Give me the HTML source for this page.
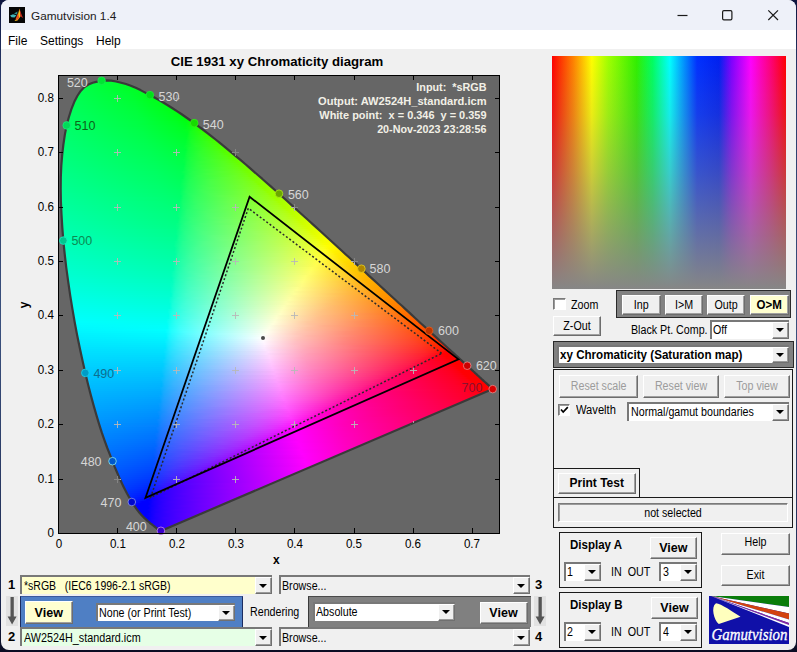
<!DOCTYPE html>
<html><head><meta charset="utf-8"><title>Gamutvision 1.4</title>
<style>
html,body{margin:0;padding:0}
body{width:797px;height:652px;position:relative;overflow:hidden;background:linear-gradient(to bottom,#0d153f 0%,#2a3c6c 12%,#3a507d 50%,#1c2850 92%,#0a0c22 100%);font-family:"Liberation Sans",sans-serif;font-size:12px;color:#000}
div,span{position:absolute;box-sizing:border-box;white-space:pre}
#win{left:1px;top:0;width:794.8px;height:650px;background:#f0f0f0;border-radius:8px 8px 8px 8px;overflow:hidden}
#tb{left:0;top:0;width:797px;height:30px;background:#eef1f9}
#mb{left:0;top:30px;width:797px;height:19px;background:#fff}
.t{transform-origin:0 50%;transform:scaleX(.89);line-height:14px;height:14px}
.tb{transform-origin:0 50%;transform:scaleX(.96);font-weight:bold;line-height:14px;height:14px}
.btn{background:#f0f0f0;border:1px solid;border-color:#fff #6d6d6d #6d6d6d #fff;box-shadow:inset -1px -1px 0 #a0a0a0}
.btn>span{left:0;right:0;text-align:center;transform-origin:50% 50%}
.dd{background:#fff;border:0 solid #787878;border-width:2px 0 0 2px}
.ab{width:17px;background:#f0f0f0;border:1px solid;border-color:#fff #707070 #707070 #fff;box-shadow:inset -1px -1px 0 #9a9a9a;right:0;top:0;bottom:0}
.ab:after{content:"";position:absolute;left:3.2px;top:50%;margin-top:-2px;border:4px solid transparent;border-top:4.3px solid #000;border-bottom:0}
.fr{border:1px solid #1a1a1a}
.cb{width:12.3px;height:12.3px;background:#fff;border:1px solid;border-color:#7a7a7a #fff #fff #7a7a7a;box-shadow:inset 1px 1px 0 #9a9a9a}
.tk{font-size:12.5px;line-height:14px;height:14px}
.wl{font-size:12.5px;line-height:14px;height:14px;color:#d4d4d4}
.inf{font-size:11.2px;font-weight:bold;color:#f2f0e6;right:310.5px;text-align:right;line-height:14px;height:14px}
</style></head><body>
<div id="win">
<div id="tb"></div><div id="mb"></div>
</div>
<svg style="position:absolute;left:9px;top:7px" width="16" height="16" viewBox="0 0 16 16"><rect width="16" height="16" fill="#060606"/><path d="M10.5 1.5 L11.8 9 L8.5 13.5 L5.5 14 L8 11 Z" fill="#f7c21c"/><path d="M10.5 1.5 L12 6 L14 11 L11.5 9.5 Z" fill="#c8251c"/><path d="M9 6 L10.3 11 L7.5 13.6 L6.8 11.5 Z" fill="#e8521c"/><path d="M1 8.5 L4 7.2 L7.5 8.2 L5.5 10.5 L2.5 10.2 Z" fill="#3fb4b8"/><path d="M5 6.5 L8.5 4.5 L8 7.5 Z" fill="#2a8f8f"/></svg><span style="left:31px;top:8px;font-size:11.8px;line-height:16px;color:#1b1b1b">Gamutvision 1.4</span><svg style="position:absolute;left:670px;top:5px" width="120" height="22"><path d="M7.5 10.5H17.5" stroke="#1a1a1a" stroke-width="1.2" fill="none"/><rect x="52.6" y="5.6" width="9.3" height="9.3" rx="1.3" stroke="#1a1a1a" stroke-width="1.2" fill="none"/><path d="M98.3 5.3L108 15M108 5.3L98.3 15" stroke="#1a1a1a" stroke-width="1.2" fill="none"/></svg><span style="left:8px;top:33px;font-size:12px;line-height:16px">File</span><span style="left:40px;top:33px;font-size:12px;line-height:16px">Settings</span><span style="left:96px;top:33px;font-size:12px;line-height:16px">Help</span><svg style="position:absolute;left:0;top:0" width="797" height="652" viewBox="0 0 797 652"><defs><clipPath id="hc"><path d="M161.4 530.7 L161.4 530.7 L161.4 530.7 L161.4 530.7 L161.4 530.7 L161.3 530.7 L161.3 530.7 L161.3 530.7 L161.3 530.7 L161.2 530.7 L161.2 530.7 L161.2 530.7 L161.2 530.7 L161.1 530.7 L161.1 530.7 L161.1 530.7 L161.1 530.7 L161.0 530.8 L161.0 530.8 L161.0 530.8 L160.9 530.8 L160.9 530.8 L160.9 530.8 L160.8 530.8 L160.8 530.8 L160.7 530.8 L160.7 530.8 L160.7 530.8 L160.6 530.8 L160.6 530.8 L160.5 530.8 L160.5 530.8 L160.4 530.8 L160.3 530.8 L160.3 530.8 L160.2 530.8 L160.1 530.8 L160.1 530.7 L160.0 530.7 L159.9 530.7 L159.8 530.6 L159.7 530.6 L159.6 530.5 L159.4 530.4 L159.3 530.3 L159.1 530.2 L159.0 530.1 L158.8 530.0 L158.7 529.9 L158.5 529.8 L158.3 529.6 L158.1 529.5 L157.9 529.3 L157.6 529.1 L157.4 528.9 L157.1 528.7 L156.9 528.5 L156.6 528.3 L156.3 528.0 L156.0 527.7 L155.7 527.5 L155.3 527.2 L154.9 526.9 L154.6 526.6 L154.2 526.2 L153.7 525.9 L153.2 525.5 L152.7 525.1 L152.2 524.7 L151.6 524.2 L151.1 523.8 L150.4 523.3 L149.8 522.8 L149.2 522.2 L148.5 521.7 L147.7 521.1 L147.0 520.4 L146.2 519.7 L145.4 518.9 L144.5 518.1 L143.6 517.2 L142.7 516.3 L141.7 515.4 L140.8 514.3 L139.7 513.1 L138.6 511.7 L137.4 510.1 L136.1 508.4 L134.8 506.5 L133.3 504.4 L131.8 502.0 L130.3 499.3 L128.7 496.5 L127.0 493.5 L125.2 490.0 L123.3 486.2 L121.3 482.0 L119.2 477.4 L117.1 472.5 L114.8 467.1 L112.5 461.2 L110.0 454.8 L107.3 448.0 L104.6 440.6 L101.8 432.7 L99.1 424.2 L96.4 415.1 L93.6 405.4 L90.8 395.1 L88.0 384.3 L85.3 372.9 L82.6 361.0 L79.9 348.5 L77.2 335.5 L74.7 322.2 L72.4 308.9 L70.2 295.5 L68.2 281.7 L66.3 267.8 L64.7 254.0 L63.3 240.6 L62.3 227.4 L61.5 214.3 L60.9 201.5 L60.7 189.1 L60.8 177.3 L61.3 165.9 L62.2 154.8 L63.4 144.3 L64.9 134.4 L66.7 125.4 L68.9 117.0 L71.4 109.2 L74.2 102.1 L77.3 96.0 L80.7 90.9 L84.4 87.1 L88.4 84.5 L92.7 82.7 L97.1 81.6 L101.6 80.8 L106.3 80.4 L111.2 80.7 L116.1 81.5 L121.1 82.7 L126.0 84.0 L130.8 85.7 L135.7 87.8 L140.5 90.1 L145.2 92.6 L149.9 95.1 L154.5 97.5 L159.1 100.1 L163.6 102.8 L168.1 105.5 L172.5 108.3 L176.9 111.1 L181.3 114.0 L185.6 117.0 L189.9 120.0 L194.2 123.1 L198.5 126.3 L202.8 129.5 L207.1 132.8 L211.3 136.1 L215.6 139.5 L219.8 142.9 L224.1 146.3 L228.3 149.8 L232.5 153.3 L236.7 156.9 L241.0 160.4 L245.2 164.0 L249.4 167.7 L253.6 171.3 L257.8 175.0 L262.1 178.7 L266.3 182.5 L270.5 186.2 L274.8 190.0 L279.0 193.7 L283.2 197.5 L287.4 201.3 L291.6 205.1 L295.8 208.9 L300.0 212.7 L304.2 216.5 L308.4 220.3 L312.6 224.1 L316.8 227.9 L321.0 231.7 L325.1 235.5 L329.2 239.2 L333.3 243.0 L337.4 246.7 L341.5 250.5 L345.5 254.2 L349.5 257.8 L353.5 261.5 L357.5 265.1 L361.4 268.7 L365.3 272.3 L369.1 275.9 L373.0 279.4 L376.7 282.8 L380.5 286.3 L384.2 289.6 L387.8 293.0 L391.4 296.3 L395.0 299.5 L398.4 302.7 L401.9 305.8 L405.2 308.9 L408.5 311.9 L411.7 314.9 L414.8 317.7 L417.8 320.5 L420.7 323.2 L423.6 325.8 L426.4 328.3 L429.1 330.8 L431.7 333.2 L434.3 335.6 L436.8 337.9 L439.2 340.1 L441.6 342.3 L443.8 344.3 L446.0 346.3 L448.1 348.2 L450.1 350.0 L452.0 351.7 L453.8 353.4 L455.6 355.0 L457.3 356.6 L458.9 358.1 L460.4 359.5 L461.9 360.9 L463.3 362.2 L464.7 363.4 L465.9 364.6 L467.2 365.7 L468.4 366.8 L469.5 367.8 L470.5 368.8 L471.6 369.7 L472.6 370.6 L473.5 371.5 L474.4 372.3 L475.2 373.1 L476.1 373.8 L476.9 374.6 L477.6 375.3 L478.4 376.0 L479.1 376.6 L479.8 377.3 L480.5 377.9 L481.1 378.5 L481.7 379.1 L482.3 379.6 L482.9 380.1 L483.4 380.6 L483.9 381.1 L484.4 381.5 L484.9 382.0 L485.4 382.4 L485.8 382.7 L486.2 383.1 L486.6 383.4 L486.9 383.8 L487.2 384.1 L487.6 384.4 L487.9 384.7 L488.2 384.9 L488.4 385.2 L488.7 385.4 L488.9 385.6 L489.1 385.8 L489.3 386.0 L489.5 386.2 L489.7 386.4 L489.9 386.5 L490.2 386.8 L490.4 387.0 L490.7 387.2 L490.9 387.4 L491.1 387.6 L491.3 387.8 L491.5 388.0 L491.6 388.1 L491.8 388.3 L491.9 388.4 L492.1 388.5 L492.2 388.6 L492.3 388.8 L492.4 388.9 L492.5 388.9 L492.6 389.0 L492.6 389.0 L492.7 389.1 L492.7 389.1 L492.7 389.1 Z"/></clipPath><linearGradient id="g0" gradientUnits="userSpaceOnUse" x1="98.9" x2="114.3"><stop offset="0" stop-color="#00ff39"/><stop offset="1" stop-color="#00ff2e"/></linearGradient><linearGradient id="g1" gradientUnits="userSpaceOnUse" x1="90.5" x2="123.8"><stop offset="0" stop-color="#00ff40"/><stop offset="1" stop-color="#00ff28"/></linearGradient><linearGradient id="g2" gradientUnits="userSpaceOnUse" x1="86.1" x2="130.3"><stop offset="0" stop-color="#00ff44"/><stop offset="1" stop-color="#00ff25"/></linearGradient><linearGradient id="g3" gradientUnits="userSpaceOnUse" x1="83.1" x2="135.3"><stop offset="0" stop-color="#00ff47"/><stop offset="0.941" stop-color="#00ff25"/><stop offset="1" stop-color="#00ff22"/></linearGradient><linearGradient id="g4" gradientUnits="userSpaceOnUse" x1="81.1" x2="139.6"><stop offset="0" stop-color="#00ff49"/><stop offset="0.895" stop-color="#00ff26"/><stop offset="1" stop-color="#00ff20"/></linearGradient><linearGradient id="g5" gradientUnits="userSpaceOnUse" x1="79.1" x2="143.6"><stop offset="0" stop-color="#00ff4c"/><stop offset="0.857" stop-color="#00ff27"/><stop offset="1" stop-color="#00ff1d"/></linearGradient><linearGradient id="g6" gradientUnits="userSpaceOnUse" x1="77.8" x2="147.5"><stop offset="0" stop-color="#00ff4e"/><stop offset="0.826" stop-color="#00ff29"/><stop offset="1" stop-color="#00ff1c"/></linearGradient><linearGradient id="g7" gradientUnits="userSpaceOnUse" x1="76.5" x2="151.3"><stop offset="0" stop-color="#00ff4f"/><stop offset="0.708" stop-color="#00ff30"/><stop offset="1" stop-color="#00ff19"/></linearGradient><linearGradient id="g8" gradientUnits="userSpaceOnUse" x1="75.3" x2="155.0"><stop offset="0" stop-color="#00ff51"/><stop offset="0.692" stop-color="#00ff31"/><stop offset="1" stop-color="#00ff17"/></linearGradient><linearGradient id="g9" gradientUnits="userSpaceOnUse" x1="74.3" x2="158.6"><stop offset="0" stop-color="#00ff53"/><stop offset="0.679" stop-color="#00ff32"/><stop offset="1" stop-color="#00ff15"/></linearGradient><linearGradient id="g10" gradientUnits="userSpaceOnUse" x1="73.3" x2="162.1"><stop offset="0" stop-color="#00ff55"/><stop offset="0.69" stop-color="#00ff31"/><stop offset="0.966" stop-color="#00ff18"/><stop offset="1" stop-color="#00ff13"/></linearGradient><linearGradient id="g11" gradientUnits="userSpaceOnUse" x1="72.3" x2="165.4"><stop offset="0" stop-color="#00ff57"/><stop offset="0.677" stop-color="#00ff33"/><stop offset="0.968" stop-color="#00ff16"/><stop offset="1" stop-color="#00ff11"/></linearGradient><linearGradient id="g12" gradientUnits="userSpaceOnUse" x1="71.5" x2="168.7"><stop offset="0" stop-color="#00ff58"/><stop offset="0.656" stop-color="#00ff35"/><stop offset="0.937" stop-color="#00ff19"/><stop offset="1" stop-color="#00ff0e"/></linearGradient><linearGradient id="g13" gradientUnits="userSpaceOnUse" x1="70.7" x2="171.9"><stop offset="0" stop-color="#00ff5a"/><stop offset="0.636" stop-color="#00ff37"/><stop offset="0.939" stop-color="#00ff18"/><stop offset="1" stop-color="#00ff0c"/></linearGradient><linearGradient id="g14" gradientUnits="userSpaceOnUse" x1="70.0" x2="175.1"><stop offset="0" stop-color="#00ff5b"/><stop offset="0.629" stop-color="#00ff38"/><stop offset="0.914" stop-color="#00ff1b"/><stop offset="1" stop-color="#00ff09"/></linearGradient><linearGradient id="g15" gradientUnits="userSpaceOnUse" x1="69.3" x2="178.2"><stop offset="0" stop-color="#00ff5d"/><stop offset="0.611" stop-color="#00ff3a"/><stop offset="0.917" stop-color="#00ff1a"/><stop offset="0.972" stop-color="#00ff0f"/><stop offset="1" stop-color="#00ff04"/></linearGradient><linearGradient id="g16" gradientUnits="userSpaceOnUse" x1="68.7" x2="181.2"><stop offset="0" stop-color="#00ff5e"/><stop offset="0.595" stop-color="#00ff3c"/><stop offset="0.892" stop-color="#00ff1d"/><stop offset="0.973" stop-color="#00ff0d"/><stop offset="1" stop-color="#00ff00"/></linearGradient><linearGradient id="g17" gradientUnits="userSpaceOnUse" x1="68.0" x2="184.1"><stop offset="0" stop-color="#00ff60"/><stop offset="0.605" stop-color="#00ff3c"/><stop offset="0.895" stop-color="#00ff1c"/><stop offset="0.974" stop-color="#00ff0a"/><stop offset="1" stop-color="#00ff00"/></linearGradient><linearGradient id="g18" gradientUnits="userSpaceOnUse" x1="67.4" x2="187.0"><stop offset="0" stop-color="#00ff62"/><stop offset="0.59" stop-color="#00ff3e"/><stop offset="0.872" stop-color="#00ff1f"/><stop offset="0.974" stop-color="#00ff08"/><stop offset="1" stop-color="#00ff00"/></linearGradient><linearGradient id="g19" gradientUnits="userSpaceOnUse" x1="66.9" x2="189.9"><stop offset="0" stop-color="#00ff63"/><stop offset="0.61" stop-color="#00ff3d"/><stop offset="0.878" stop-color="#00ff1e"/><stop offset="0.951" stop-color="#00ff0f"/><stop offset="0.976" stop-color="#00ff04"/><stop offset="1" stop-color="#0aff00"/></linearGradient><linearGradient id="g20" gradientUnits="userSpaceOnUse" x1="66.3" x2="192.7"><stop offset="0" stop-color="#00ff64"/><stop offset="0.595" stop-color="#00ff3f"/><stop offset="0.881" stop-color="#00ff1d"/><stop offset="0.952" stop-color="#00ff0d"/><stop offset="0.976" stop-color="#0aff00"/><stop offset="1" stop-color="#16ff00"/></linearGradient><linearGradient id="g21" gradientUnits="userSpaceOnUse" x1="65.8" x2="195.5"><stop offset="0" stop-color="#00ff66"/><stop offset="0.581" stop-color="#00ff41"/><stop offset="0.86" stop-color="#00ff21"/><stop offset="0.93" stop-color="#00ff13"/><stop offset="0.977" stop-color="#16ff00"/><stop offset="1" stop-color="#1eff00"/></linearGradient><linearGradient id="g22" gradientUnits="userSpaceOnUse" x1="65.3" x2="198.2"><stop offset="0" stop-color="#00ff67"/><stop offset="0.545" stop-color="#00ff44"/><stop offset="0.841" stop-color="#00ff24"/><stop offset="0.909" stop-color="#00ff17"/><stop offset="0.977" stop-color="#1eff00"/><stop offset="1" stop-color="#25ff00"/></linearGradient><linearGradient id="g23" gradientUnits="userSpaceOnUse" x1="64.9" x2="200.9"><stop offset="0" stop-color="#00ff69"/><stop offset="0.578" stop-color="#00ff42"/><stop offset="0.822" stop-color="#00ff27"/><stop offset="0.889" stop-color="#00ff1b"/><stop offset="0.978" stop-color="#24ff00"/><stop offset="1" stop-color="#2aff00"/></linearGradient><linearGradient id="g24" gradientUnits="userSpaceOnUse" x1="64.5" x2="203.6"><stop offset="0" stop-color="#00ff6a"/><stop offset="0.543" stop-color="#00ff46"/><stop offset="0.826" stop-color="#00ff27"/><stop offset="0.87" stop-color="#00ff1f"/><stop offset="0.891" stop-color="#07ff1b"/><stop offset="0.935" stop-color="#1dff0f"/><stop offset="0.978" stop-color="#2aff00"/><stop offset="1" stop-color="#30ff00"/></linearGradient><linearGradient id="g25" gradientUnits="userSpaceOnUse" x1="64.1" x2="206.2"><stop offset="0" stop-color="#00ff6b"/><stop offset="0.532" stop-color="#00ff48"/><stop offset="0.83" stop-color="#00ff26"/><stop offset="0.872" stop-color="#05ff1f"/><stop offset="0.915" stop-color="#1dff15"/><stop offset="0.936" stop-color="#24ff0e"/><stop offset="0.957" stop-color="#2aff00"/><stop offset="1" stop-color="#35ff00"/></linearGradient><linearGradient id="g26" gradientUnits="userSpaceOnUse" x1="63.7" x2="208.8"><stop offset="0" stop-color="#00ff6d"/><stop offset="0.542" stop-color="#00ff48"/><stop offset="0.833" stop-color="#00ff26"/><stop offset="0.854" stop-color="#03ff22"/><stop offset="0.875" stop-color="#14ff1e"/><stop offset="0.938" stop-color="#2aff0d"/><stop offset="0.958" stop-color="#2fff00"/><stop offset="1" stop-color="#39ff00"/></linearGradient><linearGradient id="g27" gradientUnits="userSpaceOnUse" x1="63.3" x2="211.4"><stop offset="0" stop-color="#00ff6e"/><stop offset="0.531" stop-color="#00ff4a"/><stop offset="0.816" stop-color="#00ff29"/><stop offset="0.837" stop-color="#00ff26"/><stop offset="0.857" stop-color="#13ff22"/><stop offset="0.939" stop-color="#2fff0c"/><stop offset="0.959" stop-color="#34ff00"/><stop offset="1" stop-color="#3eff00"/></linearGradient><linearGradient id="g28" gradientUnits="userSpaceOnUse" x1="63.0" x2="214.0"><stop offset="0" stop-color="#00ff70"/><stop offset="0.54" stop-color="#00ff4a"/><stop offset="0.82" stop-color="#00ff29"/><stop offset="0.84" stop-color="#12ff25"/><stop offset="0.92" stop-color="#2fff13"/><stop offset="0.96" stop-color="#39ff00"/><stop offset="1" stop-color="#42ff00"/></linearGradient><linearGradient id="g29" gradientUnits="userSpaceOnUse" x1="62.7" x2="216.5"><stop offset="0" stop-color="#00ff71"/><stop offset="0.529" stop-color="#00ff4c"/><stop offset="0.804" stop-color="#00ff2c"/><stop offset="0.824" stop-color="#11ff28"/><stop offset="0.902" stop-color="#2eff18"/><stop offset="0.961" stop-color="#3dff00"/><stop offset="1" stop-color="#46ff00"/></linearGradient><linearGradient id="g30" gradientUnits="userSpaceOnUse" x1="62.4" x2="219.0"><stop offset="0" stop-color="#00ff72"/><stop offset="0.519" stop-color="#00ff4e"/><stop offset="0.788" stop-color="#00ff2f"/><stop offset="0.827" stop-color="#1aff28"/><stop offset="0.923" stop-color="#38ff11"/><stop offset="0.962" stop-color="#41ff00"/><stop offset="1" stop-color="#4aff00"/></linearGradient><linearGradient id="g31" gradientUnits="userSpaceOnUse" x1="62.1" x2="221.5"><stop offset="0" stop-color="#00ff74"/><stop offset="0.528" stop-color="#00ff4e"/><stop offset="0.774" stop-color="#00ff31"/><stop offset="0.811" stop-color="#19ff2b"/><stop offset="0.906" stop-color="#38ff17"/><stop offset="0.962" stop-color="#46ff00"/><stop offset="1" stop-color="#4eff00"/></linearGradient><linearGradient id="g32" gradientUnits="userSpaceOnUse" x1="61.8" x2="224.0"><stop offset="0" stop-color="#00ff75"/><stop offset="0.519" stop-color="#00ff50"/><stop offset="0.759" stop-color="#00ff34"/><stop offset="0.815" stop-color="#21ff2b"/><stop offset="0.907" stop-color="#3cff16"/><stop offset="0.963" stop-color="#49ff00"/><stop offset="1" stop-color="#51ff00"/></linearGradient><linearGradient id="g33" gradientUnits="userSpaceOnUse" x1="61.6" x2="226.4"><stop offset="0" stop-color="#00ff76"/><stop offset="0.519" stop-color="#00ff51"/><stop offset="0.741" stop-color="#00ff37"/><stop offset="0.815" stop-color="#26ff2c"/><stop offset="0.926" stop-color="#45ff10"/><stop offset="0.944" stop-color="#49ff04"/><stop offset="1" stop-color="#55ff00"/></linearGradient><linearGradient id="g34" gradientUnits="userSpaceOnUse" x1="61.3" x2="228.8"><stop offset="0" stop-color="#00ff78"/><stop offset="0.527" stop-color="#00ff51"/><stop offset="0.727" stop-color="#00ff3a"/><stop offset="0.745" stop-color="#05ff37"/><stop offset="0.764" stop-color="#15ff35"/><stop offset="0.855" stop-color="#36ff24"/><stop offset="0.927" stop-color="#49ff0f"/><stop offset="0.945" stop-color="#4dff00"/><stop offset="1" stop-color="#58ff00"/></linearGradient><linearGradient id="g35" gradientUnits="userSpaceOnUse" x1="61.1" x2="231.2"><stop offset="0" stop-color="#00ff79"/><stop offset="0.518" stop-color="#00ff53"/><stop offset="0.732" stop-color="#00ff3a"/><stop offset="0.75" stop-color="#13ff37"/><stop offset="0.839" stop-color="#36ff28"/><stop offset="0.929" stop-color="#4dff0e"/><stop offset="0.946" stop-color="#51ff00"/><stop offset="1" stop-color="#5cff00"/></linearGradient><linearGradient id="g36" gradientUnits="userSpaceOnUse" x1="60.9" x2="233.6"><stop offset="0" stop-color="#00ff7a"/><stop offset="0.509" stop-color="#00ff55"/><stop offset="0.719" stop-color="#00ff3d"/><stop offset="0.737" stop-color="#12ff3a"/><stop offset="0.807" stop-color="#30ff2f"/><stop offset="0.912" stop-color="#4cff15"/><stop offset="0.947" stop-color="#54ff00"/><stop offset="1" stop-color="#5fff00"/></linearGradient><linearGradient id="g37" gradientUnits="userSpaceOnUse" x1="60.7" x2="236.0"><stop offset="0" stop-color="#00ff7c"/><stop offset="0.517" stop-color="#00ff55"/><stop offset="0.707" stop-color="#00ff3f"/><stop offset="0.724" stop-color="#11ff3d"/><stop offset="0.793" stop-color="#30ff32"/><stop offset="0.914" stop-color="#50ff15"/><stop offset="0.948" stop-color="#58ff00"/><stop offset="1" stop-color="#63ff00"/></linearGradient><linearGradient id="g38" gradientUnits="userSpaceOnUse" x1="60.5" x2="238.4"><stop offset="0" stop-color="#00ff7d"/><stop offset="0.508" stop-color="#00ff57"/><stop offset="0.695" stop-color="#00ff41"/><stop offset="0.712" stop-color="#10ff3f"/><stop offset="0.78" stop-color="#2fff35"/><stop offset="0.898" stop-color="#50ff1a"/><stop offset="0.932" stop-color="#58ff0c"/><stop offset="0.949" stop-color="#5bff00"/><stop offset="1" stop-color="#66ff00"/></linearGradient><linearGradient id="g39" gradientUnits="userSpaceOnUse" x1="60.4" x2="240.8"><stop offset="0" stop-color="#00ff7e"/><stop offset="0.5" stop-color="#00ff59"/><stop offset="0.683" stop-color="#00ff44"/><stop offset="0.717" stop-color="#1aff3f"/><stop offset="0.8" stop-color="#39ff32"/><stop offset="0.917" stop-color="#57ff14"/><stop offset="0.95" stop-color="#5fff00"/><stop offset="1" stop-color="#69ff00"/></linearGradient><linearGradient id="g40" gradientUnits="userSpaceOnUse" x1="60.2" x2="243.1"><stop offset="0" stop-color="#00ff7f"/><stop offset="0.467" stop-color="#00ff5d"/><stop offset="0.667" stop-color="#00ff47"/><stop offset="0.683" stop-color="#07ff45"/><stop offset="0.717" stop-color="#1fff40"/><stop offset="0.833" stop-color="#46ff2c"/><stop offset="0.917" stop-color="#5bff14"/><stop offset="0.95" stop-color="#62ff00"/><stop offset="1" stop-color="#6dff00"/></linearGradient><linearGradient id="g41" gradientUnits="userSpaceOnUse" x1="60.0" x2="245.5"><stop offset="0" stop-color="#00ff81"/><stop offset="0.508" stop-color="#00ff5a"/><stop offset="0.656" stop-color="#00ff49"/><stop offset="0.672" stop-color="#04ff47"/><stop offset="0.689" stop-color="#15ff45"/><stop offset="0.754" stop-color="#32ff3b"/><stop offset="0.885" stop-color="#57ff1f"/><stop offset="0.934" stop-color="#62ff0a"/><stop offset="0.951" stop-color="#66ff00"/><stop offset="1" stop-color="#70ff00"/></linearGradient><linearGradient id="g42" gradientUnits="userSpaceOnUse" x1="59.9" x2="247.8"><stop offset="0" stop-color="#00ff82"/><stop offset="0.5" stop-color="#00ff5c"/><stop offset="0.661" stop-color="#00ff49"/><stop offset="0.677" stop-color="#13ff47"/><stop offset="0.726" stop-color="#2bff40"/><stop offset="0.871" stop-color="#56ff23"/><stop offset="0.919" stop-color="#62ff13"/><stop offset="0.952" stop-color="#69ff00"/><stop offset="1" stop-color="#73ff00"/></linearGradient><linearGradient id="g43" gradientUnits="userSpaceOnUse" x1="59.8" x2="250.1"><stop offset="0" stop-color="#00ff83"/><stop offset="0.492" stop-color="#00ff5e"/><stop offset="0.651" stop-color="#00ff4c"/><stop offset="0.667" stop-color="#12ff49"/><stop offset="0.73" stop-color="#31ff40"/><stop offset="0.889" stop-color="#5eff1f"/><stop offset="0.937" stop-color="#69ff09"/><stop offset="0.952" stop-color="#6cff00"/><stop offset="1" stop-color="#77ff00"/></linearGradient><linearGradient id="g44" gradientUnits="userSpaceOnUse" x1="59.7" x2="252.4"><stop offset="0" stop-color="#00ff85"/><stop offset="0.5" stop-color="#00ff5e"/><stop offset="0.641" stop-color="#00ff4e"/><stop offset="0.656" stop-color="#11ff4c"/><stop offset="0.703" stop-color="#2aff45"/><stop offset="0.844" stop-color="#56ff2b"/><stop offset="0.922" stop-color="#69ff12"/><stop offset="0.953" stop-color="#70ff00"/><stop offset="1" stop-color="#7aff00"/></linearGradient><linearGradient id="g45" gradientUnits="userSpaceOnUse" x1="59.6" x2="254.7"><stop offset="0" stop-color="#00ff86"/><stop offset="0.492" stop-color="#00ff60"/><stop offset="0.631" stop-color="#00ff50"/><stop offset="0.662" stop-color="#1bff4c"/><stop offset="0.754" stop-color="#40ff3e"/><stop offset="0.892" stop-color="#65ff1e"/><stop offset="0.923" stop-color="#6cff12"/><stop offset="0.954" stop-color="#73ff00"/><stop offset="1" stop-color="#7dff00"/></linearGradient><linearGradient id="g46" gradientUnits="userSpaceOnUse" x1="59.5" x2="257.0"><stop offset="0" stop-color="#00ff87"/><stop offset="0.477" stop-color="#00ff63"/><stop offset="0.615" stop-color="#00ff53"/><stop offset="0.677" stop-color="#27ff4b"/><stop offset="0.815" stop-color="#55ff33"/><stop offset="0.908" stop-color="#6cff19"/><stop offset="0.954" stop-color="#76ff00"/><stop offset="1" stop-color="#80ff00"/></linearGradient><linearGradient id="g47" gradientUnits="userSpaceOnUse" x1="59.4" x2="259.3"><stop offset="0" stop-color="#00ff89"/><stop offset="0.485" stop-color="#00ff63"/><stop offset="0.606" stop-color="#00ff55"/><stop offset="0.621" stop-color="#05ff53"/><stop offset="0.652" stop-color="#1fff4f"/><stop offset="0.742" stop-color="#43ff41"/><stop offset="0.894" stop-color="#6bff1f"/><stop offset="0.924" stop-color="#72ff12"/><stop offset="0.955" stop-color="#79ff00"/><stop offset="1" stop-color="#84ff00"/></linearGradient><linearGradient id="g48" gradientUnits="userSpaceOnUse" x1="59.3" x2="261.6"><stop offset="0" stop-color="#00ff8a"/><stop offset="0.478" stop-color="#00ff65"/><stop offset="0.612" stop-color="#00ff55"/><stop offset="0.627" stop-color="#14ff53"/><stop offset="0.687" stop-color="#33ff4b"/><stop offset="0.866" stop-color="#68ff28"/><stop offset="0.925" stop-color="#76ff11"/><stop offset="0.94" stop-color="#79ff05"/><stop offset="0.97" stop-color="#80ff00"/><stop offset="1" stop-color="#87ff00"/></linearGradient><linearGradient id="g49" gradientUnits="userSpaceOnUse" x1="59.3" x2="263.9"><stop offset="0" stop-color="#00ff8b"/><stop offset="0.456" stop-color="#00ff68"/><stop offset="0.603" stop-color="#00ff57"/><stop offset="0.618" stop-color="#13ff56"/><stop offset="0.662" stop-color="#2cff50"/><stop offset="0.809" stop-color="#5cff36"/><stop offset="0.897" stop-color="#72ff1e"/><stop offset="0.926" stop-color="#79ff11"/><stop offset="0.941" stop-color="#7dff04"/><stop offset="0.985" stop-color="#87ff00"/><stop offset="1" stop-color="#8aff00"/></linearGradient><linearGradient id="g50" gradientUnits="userSpaceOnUse" x1="59.3" x2="266.1"><stop offset="0" stop-color="#00ff8d"/><stop offset="0.485" stop-color="#00ff66"/><stop offset="0.588" stop-color="#00ff5a"/><stop offset="0.632" stop-color="#22ff55"/><stop offset="0.735" stop-color="#4aff45"/><stop offset="0.882" stop-color="#72ff24"/><stop offset="0.926" stop-color="#7cff11"/><stop offset="0.941" stop-color="#80ff04"/><stop offset="1" stop-color="#8dff00"/></linearGradient><linearGradient id="g51" gradientUnits="userSpaceOnUse" x1="59.2" x2="268.4"><stop offset="0" stop-color="#00ff8e"/><stop offset="0.478" stop-color="#00ff68"/><stop offset="0.58" stop-color="#00ff5c"/><stop offset="0.623" stop-color="#21ff57"/><stop offset="0.725" stop-color="#4aff48"/><stop offset="0.884" stop-color="#75ff24"/><stop offset="0.928" stop-color="#80ff11"/><stop offset="0.942" stop-color="#83ff03"/><stop offset="1" stop-color="#91ff00"/></linearGradient><linearGradient id="g52" gradientUnits="userSpaceOnUse" x1="59.2" x2="270.7"><stop offset="0" stop-color="#00ff8f"/><stop offset="0.471" stop-color="#00ff6a"/><stop offset="0.571" stop-color="#00ff5e"/><stop offset="0.614" stop-color="#21ff59"/><stop offset="0.714" stop-color="#49ff4a"/><stop offset="0.871" stop-color="#75ff28"/><stop offset="0.929" stop-color="#83ff11"/><stop offset="0.943" stop-color="#86ff00"/><stop offset="1" stop-color="#94ff00"/></linearGradient><linearGradient id="g53" gradientUnits="userSpaceOnUse" x1="59.2" x2="272.9"><stop offset="0" stop-color="#00ff90"/><stop offset="0.465" stop-color="#00ff6c"/><stop offset="0.563" stop-color="#00ff60"/><stop offset="0.577" stop-color="#08ff5f"/><stop offset="0.606" stop-color="#20ff5b"/><stop offset="0.676" stop-color="#3fff51"/><stop offset="0.845" stop-color="#71ff30"/><stop offset="0.915" stop-color="#83ff18"/><stop offset="0.93" stop-color="#86ff10"/><stop offset="0.944" stop-color="#8aff00"/><stop offset="1" stop-color="#97ff00"/></linearGradient><linearGradient id="g54" gradientUnits="userSpaceOnUse" x1="59.2" x2="275.2"><stop offset="0" stop-color="#00ff92"/><stop offset="0.472" stop-color="#00ff6c"/><stop offset="0.556" stop-color="#00ff62"/><stop offset="0.569" stop-color="#06ff61"/><stop offset="0.597" stop-color="#20ff5d"/><stop offset="0.694" stop-color="#49ff4f"/><stop offset="0.875" stop-color="#7cff28"/><stop offset="0.931" stop-color="#8aff10"/><stop offset="0.944" stop-color="#8dff00"/><stop offset="1" stop-color="#9aff00"/></linearGradient><linearGradient id="g55" gradientUnits="userSpaceOnUse" x1="59.2" x2="277.4"><stop offset="0" stop-color="#00ff93"/><stop offset="0.458" stop-color="#00ff6f"/><stop offset="0.556" stop-color="#00ff64"/><stop offset="0.583" stop-color="#1bff60"/><stop offset="0.653" stop-color="#3dff57"/><stop offset="0.847" stop-color="#78ff31"/><stop offset="0.917" stop-color="#8aff18"/><stop offset="0.931" stop-color="#8dff10"/><stop offset="0.944" stop-color="#90ff00"/><stop offset="1" stop-color="#9eff00"/></linearGradient><linearGradient id="g56" gradientUnits="userSpaceOnUse" x1="59.2" x2="279.7"><stop offset="0" stop-color="#00ff94"/><stop offset="0.466" stop-color="#00ff6f"/><stop offset="0.548" stop-color="#00ff66"/><stop offset="0.575" stop-color="#1bff62"/><stop offset="0.658" stop-color="#42ff57"/><stop offset="0.836" stop-color="#78ff35"/><stop offset="0.918" stop-color="#8dff18"/><stop offset="0.932" stop-color="#90ff10"/><stop offset="0.945" stop-color="#94ff00"/><stop offset="1" stop-color="#a1ff00"/></linearGradient><linearGradient id="g57" gradientUnits="userSpaceOnUse" x1="59.2" x2="281.9"><stop offset="0" stop-color="#00ff96"/><stop offset="0.459" stop-color="#00ff71"/><stop offset="0.541" stop-color="#00ff68"/><stop offset="0.581" stop-color="#23ff63"/><stop offset="0.676" stop-color="#4bff55"/><stop offset="0.851" stop-color="#7fff31"/><stop offset="0.919" stop-color="#90ff18"/><stop offset="0.932" stop-color="#94ff10"/><stop offset="0.946" stop-color="#97ff00"/><stop offset="1" stop-color="#a5ff00"/></linearGradient><linearGradient id="g58" gradientUnits="userSpaceOnUse" x1="59.3" x2="284.1"><stop offset="0" stop-color="#00ff97"/><stop offset="0.473" stop-color="#00ff71"/><stop offset="0.541" stop-color="#00ff69"/><stop offset="0.554" stop-color="#14ff67"/><stop offset="0.595" stop-color="#2eff62"/><stop offset="0.716" stop-color="#5cff4f"/><stop offset="0.865" stop-color="#86ff2e"/><stop offset="0.919" stop-color="#94ff18"/><stop offset="0.932" stop-color="#97ff10"/><stop offset="0.946" stop-color="#9aff00"/><stop offset="1" stop-color="#a8ff00"/></linearGradient><linearGradient id="g59" gradientUnits="userSpaceOnUse" x1="59.3" x2="286.4"><stop offset="0" stop-color="#00ff98"/><stop offset="0.427" stop-color="#00ff77"/><stop offset="0.533" stop-color="#00ff6b"/><stop offset="0.547" stop-color="#13ff69"/><stop offset="0.6" stop-color="#34ff62"/><stop offset="0.76" stop-color="#6cff48"/><stop offset="0.88" stop-color="#8dff29"/><stop offset="0.933" stop-color="#9bff10"/><stop offset="0.947" stop-color="#9eff00"/><stop offset="1" stop-color="#abff00"/></linearGradient><linearGradient id="g60" gradientUnits="userSpaceOnUse" x1="59.4" x2="288.6"><stop offset="0" stop-color="#00ff9a"/><stop offset="0.474" stop-color="#00ff73"/><stop offset="0.526" stop-color="#00ff6d"/><stop offset="0.539" stop-color="#13ff6b"/><stop offset="0.592" stop-color="#34ff64"/><stop offset="0.75" stop-color="#6cff4b"/><stop offset="0.882" stop-color="#90ff29"/><stop offset="0.934" stop-color="#9eff0f"/><stop offset="0.947" stop-color="#a1ff00"/><stop offset="1" stop-color="#afff00"/></linearGradient><linearGradient id="g61" gradientUnits="userSpaceOnUse" x1="59.4" x2="290.8"><stop offset="0" stop-color="#00ff9b"/><stop offset="0.429" stop-color="#00ff79"/><stop offset="0.519" stop-color="#00ff6f"/><stop offset="0.532" stop-color="#12ff6d"/><stop offset="0.584" stop-color="#33ff67"/><stop offset="0.727" stop-color="#68ff50"/><stop offset="0.87" stop-color="#90ff2e"/><stop offset="0.922" stop-color="#9eff18"/><stop offset="0.935" stop-color="#a2ff0f"/><stop offset="0.948" stop-color="#a5ff00"/><stop offset="1" stop-color="#b2ff00"/></linearGradient><linearGradient id="g62" gradientUnits="userSpaceOnUse" x1="59.5" x2="293.0"><stop offset="0" stop-color="#00ff9c"/><stop offset="0.442" stop-color="#00ff79"/><stop offset="0.506" stop-color="#00ff71"/><stop offset="0.519" stop-color="#08ff70"/><stop offset="0.532" stop-color="#18ff6e"/><stop offset="0.597" stop-color="#3cff66"/><stop offset="0.74" stop-color="#6eff4f"/><stop offset="0.883" stop-color="#97ff2a"/><stop offset="0.935" stop-color="#a5ff0f"/><stop offset="0.948" stop-color="#a8ff00"/><stop offset="1" stop-color="#b6ff00"/></linearGradient><linearGradient id="g63" gradientUnits="userSpaceOnUse" x1="59.6" x2="295.2"><stop offset="0" stop-color="#00ff9e"/><stop offset="0.462" stop-color="#00ff78"/><stop offset="0.5" stop-color="#00ff73"/><stop offset="0.513" stop-color="#06ff72"/><stop offset="0.526" stop-color="#17ff70"/><stop offset="0.577" stop-color="#36ff6a"/><stop offset="0.705" stop-color="#66ff56"/><stop offset="0.859" stop-color="#94ff33"/><stop offset="0.923" stop-color="#a5ff18"/><stop offset="0.936" stop-color="#a8ff0f"/><stop offset="0.949" stop-color="#acff00"/><stop offset="1" stop-color="#baff00"/></linearGradient><linearGradient id="g64" gradientUnits="userSpaceOnUse" x1="59.6" x2="297.4"><stop offset="0" stop-color="#00ff9f"/><stop offset="0.456" stop-color="#00ff7a"/><stop offset="0.506" stop-color="#04ff74"/><stop offset="0.519" stop-color="#16ff72"/><stop offset="0.57" stop-color="#36ff6c"/><stop offset="0.696" stop-color="#66ff59"/><stop offset="0.861" stop-color="#97ff33"/><stop offset="0.924" stop-color="#a9ff18"/><stop offset="0.949" stop-color="#afff00"/><stop offset="1" stop-color="#bdff00"/></linearGradient><linearGradient id="g65" gradientUnits="userSpaceOnUse" x1="59.7" x2="299.6"><stop offset="0" stop-color="#00ffa0"/><stop offset="0.468" stop-color="#00ff7a"/><stop offset="0.494" stop-color="#00ff77"/><stop offset="0.532" stop-color="#25ff72"/><stop offset="0.633" stop-color="#53ff64"/><stop offset="0.823" stop-color="#90ff3f"/><stop offset="0.911" stop-color="#a8ff20"/><stop offset="0.937" stop-color="#afff0f"/><stop offset="0.949" stop-color="#b3ff00"/><stop offset="1" stop-color="#c1ff00"/></linearGradient><linearGradient id="g66" gradientUnits="userSpaceOnUse" x1="59.8" x2="301.8"><stop offset="0" stop-color="#00ffa2"/><stop offset="0.45" stop-color="#00ff7d"/><stop offset="0.487" stop-color="#00ff79"/><stop offset="0.525" stop-color="#24ff74"/><stop offset="0.6" stop-color="#49ff6a"/><stop offset="0.787" stop-color="#88ff48"/><stop offset="0.9" stop-color="#a9ff26"/><stop offset="0.938" stop-color="#b3ff0f"/><stop offset="0.95" stop-color="#b7ff00"/><stop offset="1" stop-color="#c5ff00"/></linearGradient><linearGradient id="g67" gradientUnits="userSpaceOnUse" x1="59.9" x2="304.1"><stop offset="0" stop-color="#00ffa3"/><stop offset="0.444" stop-color="#00ff7f"/><stop offset="0.481" stop-color="#00ff7b"/><stop offset="0.519" stop-color="#24ff76"/><stop offset="0.605" stop-color="#4eff6b"/><stop offset="0.815" stop-color="#93ff43"/><stop offset="0.914" stop-color="#b0ff20"/><stop offset="0.938" stop-color="#b7ff0f"/><stop offset="0.951" stop-color="#baff00"/><stop offset="1" stop-color="#c8ff00"/></linearGradient><linearGradient id="g68" gradientUnits="userSpaceOnUse" x1="60.0" x2="306.3"><stop offset="0" stop-color="#00ffa5"/><stop offset="0.476" stop-color="#00ff7d"/><stop offset="0.512" stop-color="#24ff78"/><stop offset="0.598" stop-color="#4eff6d"/><stop offset="0.805" stop-color="#94ff46"/><stop offset="0.902" stop-color="#b0ff26"/><stop offset="0.939" stop-color="#bbff0e"/><stop offset="0.951" stop-color="#beff00"/><stop offset="1" stop-color="#ccff00"/></linearGradient><linearGradient id="g69" gradientUnits="userSpaceOnUse" x1="60.1" x2="308.5"><stop offset="0" stop-color="#00ffa6"/><stop offset="0.476" stop-color="#00ff7e"/><stop offset="0.488" stop-color="#14ff7c"/><stop offset="0.524" stop-color="#2fff78"/><stop offset="0.622" stop-color="#5bff6a"/><stop offset="0.817" stop-color="#9aff44"/><stop offset="0.902" stop-color="#b4ff26"/><stop offset="0.939" stop-color="#beff0f"/><stop offset="0.951" stop-color="#c2ff00"/><stop offset="1" stop-color="#d0ff00"/></linearGradient><linearGradient id="g70" gradientUnits="userSpaceOnUse" x1="60.3" x2="310.7"><stop offset="0" stop-color="#00ffa7"/><stop offset="0.47" stop-color="#00ff80"/><stop offset="0.482" stop-color="#13ff7e"/><stop offset="0.53" stop-color="#36ff78"/><stop offset="0.663" stop-color="#6cff65"/><stop offset="0.831" stop-color="#a2ff41"/><stop offset="0.916" stop-color="#bbff20"/><stop offset="0.94" stop-color="#c2ff0f"/><stop offset="0.952" stop-color="#c6ff00"/><stop offset="1" stop-color="#d4ff00"/></linearGradient><linearGradient id="g71" gradientUnits="userSpaceOnUse" x1="60.4" x2="312.9"><stop offset="0" stop-color="#00ffa9"/><stop offset="0.464" stop-color="#00ff82"/><stop offset="0.476" stop-color="#13ff80"/><stop offset="0.512" stop-color="#2fff7c"/><stop offset="0.631" stop-color="#64ff6b"/><stop offset="0.798" stop-color="#9bff4b"/><stop offset="0.905" stop-color="#bbff26"/><stop offset="0.94" stop-color="#c6ff0e"/><stop offset="0.952" stop-color="#caff00"/><stop offset="1" stop-color="#d8ff00"/></linearGradient><linearGradient id="g72" gradientUnits="userSpaceOnUse" x1="60.5" x2="315.1"><stop offset="0" stop-color="#00ffaa"/><stop offset="0.452" stop-color="#00ff84"/><stop offset="0.464" stop-color="#08ff83"/><stop offset="0.488" stop-color="#23ff80"/><stop offset="0.56" stop-color="#4aff77"/><stop offset="0.762" stop-color="#93ff54"/><stop offset="0.881" stop-color="#b8ff32"/><stop offset="0.929" stop-color="#c6ff19"/><stop offset="0.952" stop-color="#ceff00"/><stop offset="1" stop-color="#dcff00"/></linearGradient><linearGradient id="g73" gradientUnits="userSpaceOnUse" x1="60.6" x2="317.3"><stop offset="0" stop-color="#00ffac"/><stop offset="0.447" stop-color="#00ff86"/><stop offset="0.459" stop-color="#07ff85"/><stop offset="0.471" stop-color="#18ff84"/><stop offset="0.518" stop-color="#39ff7e"/><stop offset="0.647" stop-color="#6fff6b"/><stop offset="0.812" stop-color="#a6ff49"/><stop offset="0.906" stop-color="#c3ff27"/><stop offset="0.941" stop-color="#ceff0e"/><stop offset="0.953" stop-color="#d2ff00"/><stop offset="1" stop-color="#e0ff00"/></linearGradient><linearGradient id="g74" gradientUnits="userSpaceOnUse" x1="60.8" x2="319.5"><stop offset="0" stop-color="#00ffad"/><stop offset="0.442" stop-color="#00ff88"/><stop offset="0.453" stop-color="#05ff87"/><stop offset="0.465" stop-color="#18ff86"/><stop offset="0.523" stop-color="#3fff7f"/><stop offset="0.674" stop-color="#7cff68"/><stop offset="0.837" stop-color="#b1ff42"/><stop offset="0.919" stop-color="#cbff21"/><stop offset="0.953" stop-color="#d6ff00"/><stop offset="1" stop-color="#e5ff00"/></linearGradient><linearGradient id="g75" gradientUnits="userSpaceOnUse" x1="60.9" x2="321.7"><stop offset="0" stop-color="#00ffae"/><stop offset="0.407" stop-color="#00ff8e"/><stop offset="0.442" stop-color="#00ff8a"/><stop offset="0.465" stop-color="#1dff87"/><stop offset="0.523" stop-color="#42ff80"/><stop offset="0.698" stop-color="#87ff65"/><stop offset="0.86" stop-color="#bcff3c"/><stop offset="0.93" stop-color="#d2ff1a"/><stop offset="0.953" stop-color="#daff00"/><stop offset="1" stop-color="#e9ff00"/></linearGradient><linearGradient id="g76" gradientUnits="userSpaceOnUse" x1="61.1" x2="323.9"><stop offset="0" stop-color="#00ffb0"/><stop offset="0.437" stop-color="#00ff8c"/><stop offset="0.471" stop-color="#26ff88"/><stop offset="0.54" stop-color="#4dff7f"/><stop offset="0.736" stop-color="#97ff5e"/><stop offset="0.862" stop-color="#c0ff3c"/><stop offset="0.92" stop-color="#d3ff21"/><stop offset="0.943" stop-color="#daff0e"/><stop offset="0.954" stop-color="#deff00"/><stop offset="1" stop-color="#edff00"/></linearGradient><linearGradient id="g77" gradientUnits="userSpaceOnUse" x1="61.2" x2="326.1"><stop offset="0" stop-color="#00ffb1"/><stop offset="0.432" stop-color="#00ff8e"/><stop offset="0.466" stop-color="#26ff8a"/><stop offset="0.534" stop-color="#4dff81"/><stop offset="0.739" stop-color="#9bff5f"/><stop offset="0.875" stop-color="#c8ff38"/><stop offset="0.932" stop-color="#dbff19"/><stop offset="0.955" stop-color="#e2ff00"/><stop offset="1" stop-color="#f2ff00"/></linearGradient><linearGradient id="g78" gradientUnits="userSpaceOnUse" x1="61.4" x2="328.3"><stop offset="0" stop-color="#00ffb3"/><stop offset="0.432" stop-color="#00ff8f"/><stop offset="0.443" stop-color="#15ff8e"/><stop offset="0.477" stop-color="#31ff8a"/><stop offset="0.568" stop-color="#5fff7e"/><stop offset="0.773" stop-color="#a9ff58"/><stop offset="0.886" stop-color="#d0ff34"/><stop offset="0.932" stop-color="#dfff1a"/><stop offset="0.955" stop-color="#e7ff00"/><stop offset="1" stop-color="#f6ff00"/></linearGradient><linearGradient id="g79" gradientUnits="userSpaceOnUse" x1="61.6" x2="330.4"><stop offset="0" stop-color="#00ffb4"/><stop offset="0.404" stop-color="#00ff94"/><stop offset="0.427" stop-color="#00ff91"/><stop offset="0.438" stop-color="#15ff90"/><stop offset="0.472" stop-color="#31ff8c"/><stop offset="0.573" stop-color="#64ff7f"/><stop offset="0.787" stop-color="#b2ff56"/><stop offset="0.899" stop-color="#d8ff2f"/><stop offset="0.933" stop-color="#e3ff1a"/><stop offset="0.955" stop-color="#ebff00"/><stop offset="1" stop-color="#fbff00"/></linearGradient><linearGradient id="g80" gradientUnits="userSpaceOnUse" x1="61.7" x2="332.6"><stop offset="0" stop-color="#00ffb6"/><stop offset="0.422" stop-color="#00ff93"/><stop offset="0.433" stop-color="#15ff92"/><stop offset="0.478" stop-color="#38ff8d"/><stop offset="0.589" stop-color="#6dff7e"/><stop offset="0.778" stop-color="#b2ff59"/><stop offset="0.878" stop-color="#d5ff39"/><stop offset="0.933" stop-color="#e8ff1a"/><stop offset="0.956" stop-color="#f0ff00"/><stop offset="1" stop-color="#fffe00"/></linearGradient><linearGradient id="g81" gradientUnits="userSpaceOnUse" x1="61.9" x2="334.8"><stop offset="0" stop-color="#00ffb7"/><stop offset="0.411" stop-color="#00ff96"/><stop offset="0.422" stop-color="#0aff95"/><stop offset="0.444" stop-color="#25ff92"/><stop offset="0.522" stop-color="#53ff89"/><stop offset="0.722" stop-color="#a2ff67"/><stop offset="0.867" stop-color="#d5ff3f"/><stop offset="0.933" stop-color="#ecff1b"/><stop offset="0.956" stop-color="#f4ff00"/><stop offset="1" stop-color="#fffa00"/></linearGradient><linearGradient id="g82" gradientUnits="userSpaceOnUse" x1="62.1" x2="337.0"><stop offset="0" stop-color="#00ffb9"/><stop offset="0.407" stop-color="#00ff98"/><stop offset="0.44" stop-color="#25ff94"/><stop offset="0.516" stop-color="#53ff8b"/><stop offset="0.714" stop-color="#a2ff6a"/><stop offset="0.846" stop-color="#d1ff47"/><stop offset="0.923" stop-color="#edff23"/><stop offset="0.956" stop-color="#f9ff00"/><stop offset="1" stop-color="#fff500"/></linearGradient><linearGradient id="g83" gradientUnits="userSpaceOnUse" x1="62.3" x2="339.2"><stop offset="0" stop-color="#00ffba"/><stop offset="0.402" stop-color="#00ff9a"/><stop offset="0.435" stop-color="#25ff96"/><stop offset="0.5" stop-color="#4eff8e"/><stop offset="0.696" stop-color="#9fff6f"/><stop offset="0.848" stop-color="#d6ff48"/><stop offset="0.913" stop-color="#eeff2a"/><stop offset="0.946" stop-color="#faff0e"/><stop offset="0.957" stop-color="#feff00"/><stop offset="1" stop-color="#fff000"/></linearGradient><linearGradient id="g84" gradientUnits="userSpaceOnUse" x1="62.5" x2="341.4"><stop offset="0" stop-color="#00ffbc"/><stop offset="0.402" stop-color="#00ff9b"/><stop offset="0.424" stop-color="#1fff99"/><stop offset="0.478" stop-color="#45ff93"/><stop offset="0.63" stop-color="#89ff7d"/><stop offset="0.804" stop-color="#caff57"/><stop offset="0.891" stop-color="#eaff37"/><stop offset="0.935" stop-color="#faff1b"/><stop offset="0.957" stop-color="#fffb00"/><stop offset="1" stop-color="#ffec00"/></linearGradient><linearGradient id="g85" gradientUnits="userSpaceOnUse" x1="62.7" x2="343.5"><stop offset="0" stop-color="#00ffbd"/><stop offset="0.387" stop-color="#00ff9f"/><stop offset="0.398" stop-color="#00ff9d"/><stop offset="0.419" stop-color="#1fff9b"/><stop offset="0.473" stop-color="#45ff95"/><stop offset="0.613" stop-color="#85ff81"/><stop offset="0.785" stop-color="#c6ff5d"/><stop offset="0.892" stop-color="#efff37"/><stop offset="0.935" stop-color="#ffff1b"/><stop offset="0.957" stop-color="#fff700"/><stop offset="1" stop-color="#ffe700"/></linearGradient><linearGradient id="g86" gradientUnits="userSpaceOnUse" x1="62.9" x2="345.7"><stop offset="0" stop-color="#00ffbf"/><stop offset="0.394" stop-color="#00ffa0"/><stop offset="0.415" stop-color="#1fff9d"/><stop offset="0.468" stop-color="#45ff97"/><stop offset="0.596" stop-color="#81ff85"/><stop offset="0.777" stop-color="#c7ff61"/><stop offset="0.883" stop-color="#f0ff3c"/><stop offset="0.926" stop-color="#fffe24"/><stop offset="0.957" stop-color="#fff200"/><stop offset="1" stop-color="#ffe300"/></linearGradient><linearGradient id="g87" gradientUnits="userSpaceOnUse" x1="63.1" x2="347.9"><stop offset="0" stop-color="#00ffc0"/><stop offset="0.394" stop-color="#00ffa1"/><stop offset="0.404" stop-color="#18ffa0"/><stop offset="0.447" stop-color="#3bff9b"/><stop offset="0.553" stop-color="#72ff8d"/><stop offset="0.755" stop-color="#c3ff68"/><stop offset="0.872" stop-color="#f0ff42"/><stop offset="0.915" stop-color="#fffd2c"/><stop offset="0.947" stop-color="#fff10e"/><stop offset="0.957" stop-color="#ffed00"/><stop offset="1" stop-color="#ffdf00"/></linearGradient><linearGradient id="g88" gradientUnits="userSpaceOnUse" x1="63.3" x2="350.1"><stop offset="0" stop-color="#00ffc2"/><stop offset="0.389" stop-color="#00ffa3"/><stop offset="0.4" stop-color="#18ffa2"/><stop offset="0.442" stop-color="#3cff9d"/><stop offset="0.558" stop-color="#77ff8e"/><stop offset="0.758" stop-color="#c7ff68"/><stop offset="0.874" stop-color="#f5ff43"/><stop offset="0.905" stop-color="#fffc32"/><stop offset="0.937" stop-color="#fff01a"/><stop offset="0.958" stop-color="#ffe900"/><stop offset="1" stop-color="#ffda00"/></linearGradient><linearGradient id="g89" gradientUnits="userSpaceOnUse" x1="63.5" x2="352.3"><stop offset="0" stop-color="#00ffc3"/><stop offset="0.385" stop-color="#00ffa5"/><stop offset="0.396" stop-color="#18ffa4"/><stop offset="0.438" stop-color="#3cffa0"/><stop offset="0.542" stop-color="#73ff92"/><stop offset="0.729" stop-color="#c0ff71"/><stop offset="0.854" stop-color="#f2ff4c"/><stop offset="0.885" stop-color="#ffff3e"/><stop offset="0.937" stop-color="#ffeb1a"/><stop offset="0.958" stop-color="#ffe400"/><stop offset="1" stop-color="#ffd600"/></linearGradient><linearGradient id="g90" gradientUnits="userSpaceOnUse" x1="63.8" x2="354.4"><stop offset="0" stop-color="#00ffc5"/><stop offset="0.375" stop-color="#00ffa8"/><stop offset="0.406" stop-color="#28ffa5"/><stop offset="0.469" stop-color="#52ff9e"/><stop offset="0.656" stop-color="#a6ff81"/><stop offset="0.813" stop-color="#e5ff5c"/><stop offset="0.875" stop-color="#ffff44"/><stop offset="0.927" stop-color="#ffeb23"/><stop offset="0.958" stop-color="#ffe000"/><stop offset="1" stop-color="#ffd200"/></linearGradient><linearGradient id="g91" gradientUnits="userSpaceOnUse" x1="64.0" x2="356.6"><stop offset="0" stop-color="#00ffc7"/><stop offset="0.371" stop-color="#00ffaa"/><stop offset="0.402" stop-color="#28ffa7"/><stop offset="0.464" stop-color="#52ffa0"/><stop offset="0.619" stop-color="#9aff8a"/><stop offset="0.804" stop-color="#e6ff60"/><stop offset="0.866" stop-color="#fffe49"/><stop offset="0.928" stop-color="#ffe622"/><stop offset="0.959" stop-color="#ffdb00"/><stop offset="1" stop-color="#ffce00"/></linearGradient><linearGradient id="g92" gradientUnits="userSpaceOnUse" x1="64.2" x2="358.8"><stop offset="0" stop-color="#00ffc8"/><stop offset="0.367" stop-color="#00ffac"/><stop offset="0.388" stop-color="#1effaa"/><stop offset="0.429" stop-color="#40ffa6"/><stop offset="0.551" stop-color="#80ff96"/><stop offset="0.755" stop-color="#d6ff6f"/><stop offset="0.857" stop-color="#fffd4e"/><stop offset="0.929" stop-color="#ffe122"/><stop offset="0.959" stop-color="#ffd700"/><stop offset="1" stop-color="#ffca00"/></linearGradient><linearGradient id="g93" gradientUnits="userSpaceOnUse" x1="64.5" x2="361.0"><stop offset="0" stop-color="#00ffca"/><stop offset="0.367" stop-color="#00ffae"/><stop offset="0.378" stop-color="#16ffad"/><stop offset="0.418" stop-color="#3cffa9"/><stop offset="0.52" stop-color="#74ff9c"/><stop offset="0.735" stop-color="#d1ff76"/><stop offset="0.847" stop-color="#fffc53"/><stop offset="0.929" stop-color="#ffdd22"/><stop offset="0.959" stop-color="#ffd200"/><stop offset="1" stop-color="#ffc600"/></linearGradient><linearGradient id="g94" gradientUnits="userSpaceOnUse" x1="64.7" x2="363.2"><stop offset="0" stop-color="#00ffcb"/><stop offset="0.364" stop-color="#00ffb0"/><stop offset="0.374" stop-color="#16ffaf"/><stop offset="0.404" stop-color="#35ffac"/><stop offset="0.485" stop-color="#66ffa3"/><stop offset="0.707" stop-color="#caff7e"/><stop offset="0.828" stop-color="#feff5c"/><stop offset="0.919" stop-color="#ffdc29"/><stop offset="0.939" stop-color="#ffd519"/><stop offset="0.96" stop-color="#ffce00"/><stop offset="1" stop-color="#ffc200"/></linearGradient><linearGradient id="g95" gradientUnits="userSpaceOnUse" x1="65.0" x2="365.3"><stop offset="0" stop-color="#00ffcd"/><stop offset="0.36" stop-color="#00ffb2"/><stop offset="0.37" stop-color="#16ffb1"/><stop offset="0.4" stop-color="#35ffae"/><stop offset="0.48" stop-color="#66ffa5"/><stop offset="0.71" stop-color="#cfff7f"/><stop offset="0.82" stop-color="#ffff60"/><stop offset="0.92" stop-color="#ffd728"/><stop offset="0.95" stop-color="#ffcd0c"/><stop offset="0.96" stop-color="#ffca00"/><stop offset="1" stop-color="#ffbe00"/></linearGradient><linearGradient id="g96" gradientUnits="userSpaceOnUse" x1="65.2" x2="367.5"><stop offset="0" stop-color="#00ffcf"/><stop offset="0.35" stop-color="#00ffb5"/><stop offset="0.36" stop-color="#0bffb4"/><stop offset="0.37" stop-color="#1cffb3"/><stop offset="0.41" stop-color="#40ffaf"/><stop offset="0.53" stop-color="#82ffa0"/><stop offset="0.73" stop-color="#dcff7c"/><stop offset="0.81" stop-color="#fffe65"/><stop offset="0.92" stop-color="#ffd328"/><stop offset="0.95" stop-color="#ffc90c"/><stop offset="0.96" stop-color="#ffc600"/><stop offset="1" stop-color="#ffba00"/></linearGradient><linearGradient id="g97" gradientUnits="userSpaceOnUse" x1="65.5" x2="369.7"><stop offset="0" stop-color="#00ffd0"/><stop offset="0.347" stop-color="#00ffb7"/><stop offset="0.376" stop-color="#27ffb4"/><stop offset="0.426" stop-color="#4dffaf"/><stop offset="0.554" stop-color="#91ff9f"/><stop offset="0.752" stop-color="#eaff78"/><stop offset="0.802" stop-color="#fffd69"/><stop offset="0.921" stop-color="#ffce28"/><stop offset="0.95" stop-color="#ffc50c"/><stop offset="0.96" stop-color="#ffc200"/><stop offset="1" stop-color="#ffb600"/></linearGradient><linearGradient id="g98" gradientUnits="userSpaceOnUse" x1="65.8" x2="371.9"><stop offset="0" stop-color="#00ffd2"/><stop offset="0.343" stop-color="#00ffb9"/><stop offset="0.373" stop-color="#28ffb7"/><stop offset="0.441" stop-color="#5affaf"/><stop offset="0.637" stop-color="#baff93"/><stop offset="0.784" stop-color="#feff71"/><stop offset="0.922" stop-color="#ffca27"/><stop offset="0.951" stop-color="#ffc00b"/><stop offset="0.961" stop-color="#ffbd00"/><stop offset="1" stop-color="#ffb200"/></linearGradient><linearGradient id="g99" gradientUnits="userSpaceOnUse" x1="66.1" x2="374.1"><stop offset="0" stop-color="#00ffd4"/><stop offset="0.343" stop-color="#00ffbb"/><stop offset="0.363" stop-color="#22ffb9"/><stop offset="0.402" stop-color="#44ffb5"/><stop offset="0.51" stop-color="#81ffa9"/><stop offset="0.716" stop-color="#e2ff85"/><stop offset="0.775" stop-color="#feff75"/><stop offset="0.912" stop-color="#ffc92e"/><stop offset="0.951" stop-color="#ffbc0c"/><stop offset="0.961" stop-color="#ffb900"/><stop offset="1" stop-color="#ffae00"/></linearGradient><linearGradient id="g100" gradientUnits="userSpaceOnUse" x1="66.3" x2="376.2"><stop offset="0" stop-color="#00ffd6"/><stop offset="0.34" stop-color="#00ffbe"/><stop offset="0.35" stop-color="#14ffbd"/><stop offset="0.369" stop-color="#2cffbb"/><stop offset="0.427" stop-color="#57ffb5"/><stop offset="0.612" stop-color="#b6ff9b"/><stop offset="0.767" stop-color="#ffff79"/><stop offset="0.903" stop-color="#ffc833"/><stop offset="0.942" stop-color="#ffbb17"/><stop offset="0.961" stop-color="#ffb500"/><stop offset="1" stop-color="#ffaa00"/></linearGradient><linearGradient id="g101" gradientUnits="userSpaceOnUse" x1="66.6" x2="378.4"><stop offset="0" stop-color="#00ffd7"/><stop offset="0.33" stop-color="#00ffc0"/><stop offset="0.34" stop-color="#05ffbf"/><stop offset="0.35" stop-color="#1affbf"/><stop offset="0.388" stop-color="#40ffbb"/><stop offset="0.485" stop-color="#7bffb0"/><stop offset="0.699" stop-color="#e3ff8c"/><stop offset="0.757" stop-color="#ffff7e"/><stop offset="0.883" stop-color="#ffca3e"/><stop offset="0.942" stop-color="#ffb717"/><stop offset="0.961" stop-color="#ffb100"/><stop offset="1" stop-color="#ffa600"/></linearGradient><linearGradient id="g102" gradientUnits="userSpaceOnUse" x1="66.9" x2="380.6"><stop offset="0" stop-color="#00ffd9"/><stop offset="0.327" stop-color="#00ffc3"/><stop offset="0.337" stop-color="#07ffc2"/><stop offset="0.346" stop-color="#1bffc1"/><stop offset="0.385" stop-color="#41ffbd"/><stop offset="0.49" stop-color="#81ffb1"/><stop offset="0.702" stop-color="#e9ff8e"/><stop offset="0.75" stop-color="#fffd81"/><stop offset="0.885" stop-color="#ffc63d"/><stop offset="0.942" stop-color="#ffb317"/><stop offset="0.962" stop-color="#ffad00"/><stop offset="1" stop-color="#ffa200"/></linearGradient><linearGradient id="g103" gradientUnits="userSpaceOnUse" x1="67.2" x2="382.8"><stop offset="0" stop-color="#00ffdb"/><stop offset="0.324" stop-color="#00ffc5"/><stop offset="0.333" stop-color="#08ffc4"/><stop offset="0.343" stop-color="#1cffc3"/><stop offset="0.381" stop-color="#41ffc0"/><stop offset="0.476" stop-color="#7cffb5"/><stop offset="0.676" stop-color="#e1ff95"/><stop offset="0.743" stop-color="#fffc84"/><stop offset="0.886" stop-color="#ffc13c"/><stop offset="0.933" stop-color="#ffb21f"/><stop offset="0.962" stop-color="#ffa900"/><stop offset="1" stop-color="#ff9f00"/></linearGradient><linearGradient id="g104" gradientUnits="userSpaceOnUse" x1="67.5" x2="385.0"><stop offset="0" stop-color="#00ffdd"/><stop offset="0.324" stop-color="#00ffc7"/><stop offset="0.343" stop-color="#21ffc5"/><stop offset="0.39" stop-color="#4cffc1"/><stop offset="0.524" stop-color="#99ffb1"/><stop offset="0.724" stop-color="#fdff8d"/><stop offset="0.867" stop-color="#ffc446"/><stop offset="0.933" stop-color="#ffae1f"/><stop offset="0.962" stop-color="#ffa500"/><stop offset="1" stop-color="#ff9b00"/></linearGradient><linearGradient id="g105" gradientUnits="userSpaceOnUse" x1="67.8" x2="387.2"><stop offset="0" stop-color="#00ffde"/><stop offset="0.321" stop-color="#00ffc9"/><stop offset="0.34" stop-color="#21ffc8"/><stop offset="0.377" stop-color="#45ffc4"/><stop offset="0.472" stop-color="#80ffba"/><stop offset="0.689" stop-color="#f0ff97"/><stop offset="0.717" stop-color="#ffff91"/><stop offset="0.849" stop-color="#ffc64f"/><stop offset="0.934" stop-color="#ffaa1e"/><stop offset="0.962" stop-color="#ffa200"/><stop offset="1" stop-color="#ff9700"/></linearGradient><linearGradient id="g106" gradientUnits="userSpaceOnUse" x1="68.1" x2="389.3"><stop offset="0" stop-color="#00ffe0"/><stop offset="0.318" stop-color="#00ffcc"/><stop offset="0.336" stop-color="#22ffca"/><stop offset="0.383" stop-color="#4dffc6"/><stop offset="0.505" stop-color="#95ffb8"/><stop offset="0.701" stop-color="#fbff97"/><stop offset="0.738" stop-color="#fff085"/><stop offset="0.869" stop-color="#ffbb45"/><stop offset="0.935" stop-color="#ffa61e"/><stop offset="0.963" stop-color="#ff9e00"/><stop offset="1" stop-color="#ff9300"/></linearGradient><linearGradient id="g107" gradientUnits="userSpaceOnUse" x1="68.4" x2="391.5"><stop offset="0" stop-color="#00ffe2"/><stop offset="0.318" stop-color="#00ffce"/><stop offset="0.327" stop-color="#1affcd"/><stop offset="0.364" stop-color="#42ffca"/><stop offset="0.458" stop-color="#7fffc0"/><stop offset="0.673" stop-color="#f1ff9f"/><stop offset="0.701" stop-color="#fffe98"/><stop offset="0.822" stop-color="#ffc75b"/><stop offset="0.925" stop-color="#ffa525"/><stop offset="0.953" stop-color="#ff9c0a"/><stop offset="0.963" stop-color="#ff9a00"/><stop offset="1" stop-color="#ff8f00"/></linearGradient><linearGradient id="g108" gradientUnits="userSpaceOnUse" x1="68.7" x2="393.7"><stop offset="0" stop-color="#00ffe4"/><stop offset="0.315" stop-color="#01ffd0"/><stop offset="0.324" stop-color="#1bffcf"/><stop offset="0.361" stop-color="#42ffcc"/><stop offset="0.454" stop-color="#80ffc3"/><stop offset="0.676" stop-color="#f8ffa1"/><stop offset="0.704" stop-color="#fff796"/><stop offset="0.852" stop-color="#ffb84d"/><stop offset="0.926" stop-color="#ffa124"/><stop offset="0.954" stop-color="#ff980a"/><stop offset="0.963" stop-color="#ff9600"/><stop offset="1" stop-color="#ff8c00"/></linearGradient><linearGradient id="g109" gradientUnits="userSpaceOnUse" x1="69.0" x2="395.9"><stop offset="0" stop-color="#00ffe6"/><stop offset="0.306" stop-color="#00ffd3"/><stop offset="0.333" stop-color="#2cffd1"/><stop offset="0.389" stop-color="#5affcc"/><stop offset="0.528" stop-color="#acffbc"/><stop offset="0.676" stop-color="#fdffa3"/><stop offset="0.824" stop-color="#ffbe5a"/><stop offset="0.926" stop-color="#ff9d24"/><stop offset="0.954" stop-color="#ff950a"/><stop offset="0.963" stop-color="#ff9200"/><stop offset="1" stop-color="#ff8800"/></linearGradient><linearGradient id="g110" gradientUnits="userSpaceOnUse" x1="69.3" x2="398.1"><stop offset="0" stop-color="#00ffe8"/><stop offset="0.303" stop-color="#00ffd6"/><stop offset="0.321" stop-color="#21ffd4"/><stop offset="0.358" stop-color="#46ffd1"/><stop offset="0.459" stop-color="#89ffc7"/><stop offset="0.67" stop-color="#feffa7"/><stop offset="0.807" stop-color="#ffc061"/><stop offset="0.927" stop-color="#ff9924"/><stop offset="0.945" stop-color="#ff9315"/><stop offset="0.963" stop-color="#ff8e00"/><stop offset="1" stop-color="#ff8400"/></linearGradient><linearGradient id="g111" gradientUnits="userSpaceOnUse" x1="69.6" x2="400.3"><stop offset="0" stop-color="#00ffea"/><stop offset="0.3" stop-color="#00ffd8"/><stop offset="0.318" stop-color="#22ffd7"/><stop offset="0.355" stop-color="#47ffd4"/><stop offset="0.455" stop-color="#8affca"/><stop offset="0.655" stop-color="#fbffad"/><stop offset="0.682" stop-color="#fff4a0"/><stop offset="0.809" stop-color="#ffbb60"/><stop offset="0.918" stop-color="#ff9729"/><stop offset="0.945" stop-color="#ff8f15"/><stop offset="0.964" stop-color="#ff8a00"/><stop offset="1" stop-color="#ff8000"/></linearGradient><linearGradient id="g112" gradientUnits="userSpaceOnUse" x1="69.9" x2="402.5"><stop offset="0" stop-color="#00ffec"/><stop offset="0.3" stop-color="#00ffda"/><stop offset="0.309" stop-color="#19ffda"/><stop offset="0.345" stop-color="#43ffd7"/><stop offset="0.445" stop-color="#88ffcd"/><stop offset="0.655" stop-color="#fffeaf"/><stop offset="0.773" stop-color="#ffc571"/><stop offset="0.918" stop-color="#ff9329"/><stop offset="0.945" stop-color="#ff8b15"/><stop offset="0.964" stop-color="#ff8600"/><stop offset="1" stop-color="#ff7c00"/></linearGradient><linearGradient id="g113" gradientUnits="userSpaceOnUse" x1="70.3" x2="404.6"><stop offset="0" stop-color="#00ffee"/><stop offset="0.297" stop-color="#00ffdd"/><stop offset="0.306" stop-color="#1affdc"/><stop offset="0.333" stop-color="#3bffda"/><stop offset="0.405" stop-color="#72ffd4"/><stop offset="0.64" stop-color="#fcffb5"/><stop offset="0.784" stop-color="#ffbc6c"/><stop offset="0.919" stop-color="#ff8f29"/><stop offset="0.955" stop-color="#ff8509"/><stop offset="0.964" stop-color="#ff8200"/><stop offset="1" stop-color="#ff7900"/></linearGradient><linearGradient id="g114" gradientUnits="userSpaceOnUse" x1="70.6" x2="406.8"><stop offset="0" stop-color="#00fff0"/><stop offset="0.295" stop-color="#00ffdf"/><stop offset="0.304" stop-color="#1bffdf"/><stop offset="0.33" stop-color="#3cffdd"/><stop offset="0.411" stop-color="#79ffd6"/><stop offset="0.634" stop-color="#feffb9"/><stop offset="0.768" stop-color="#ffbe73"/><stop offset="0.92" stop-color="#ff8b28"/><stop offset="0.946" stop-color="#ff8314"/><stop offset="0.964" stop-color="#ff7e00"/><stop offset="1" stop-color="#ff7500"/></linearGradient><linearGradient id="g115" gradientUnits="userSpaceOnUse" x1="70.9" x2="409.0"><stop offset="0" stop-color="#00fff2"/><stop offset="0.286" stop-color="#00ffe2"/><stop offset="0.313" stop-color="#2cffe1"/><stop offset="0.357" stop-color="#56ffdd"/><stop offset="0.473" stop-color="#a3ffd2"/><stop offset="0.625" stop-color="#feffbd"/><stop offset="0.75" stop-color="#ffc17b"/><stop offset="0.92" stop-color="#ff8728"/><stop offset="0.946" stop-color="#ff8014"/><stop offset="0.964" stop-color="#ff7b00"/><stop offset="1" stop-color="#ff7100"/></linearGradient><linearGradient id="g116" gradientUnits="userSpaceOnUse" x1="71.3" x2="411.1"><stop offset="0" stop-color="#00fff4"/><stop offset="0.283" stop-color="#00ffe5"/><stop offset="0.301" stop-color="#21ffe4"/><stop offset="0.336" stop-color="#48ffe1"/><stop offset="0.416" stop-color="#83ffdb"/><stop offset="0.619" stop-color="#fffec1"/><stop offset="0.735" stop-color="#ffc382"/><stop offset="0.92" stop-color="#ff8328"/><stop offset="0.947" stop-color="#ff7c14"/><stop offset="0.965" stop-color="#ff7700"/><stop offset="1" stop-color="#ff6d00"/></linearGradient><linearGradient id="g117" gradientUnits="userSpaceOnUse" x1="71.6" x2="413.3"><stop offset="0" stop-color="#00fff6"/><stop offset="0.283" stop-color="#00ffe8"/><stop offset="0.292" stop-color="#18ffe7"/><stop offset="0.319" stop-color="#3bffe5"/><stop offset="0.398" stop-color="#7bffdf"/><stop offset="0.611" stop-color="#ffffc6"/><stop offset="0.717" stop-color="#ffc78a"/><stop offset="0.867" stop-color="#ff8f44"/><stop offset="0.938" stop-color="#ff7a1c"/><stop offset="0.965" stop-color="#ff7300"/><stop offset="1" stop-color="#ff6900"/></linearGradient><linearGradient id="g118" gradientUnits="userSpaceOnUse" x1="72.0" x2="415.5"><stop offset="0" stop-color="#00fff8"/><stop offset="0.281" stop-color="#00ffea"/><stop offset="0.289" stop-color="#19ffea"/><stop offset="0.316" stop-color="#3cffe8"/><stop offset="0.395" stop-color="#7cffe2"/><stop offset="0.596" stop-color="#fcffcb"/><stop offset="0.728" stop-color="#ffbd84"/><stop offset="0.904" stop-color="#ff8032"/><stop offset="0.947" stop-color="#ff7414"/><stop offset="0.965" stop-color="#ff6f00"/><stop offset="1" stop-color="#ff6500"/></linearGradient><linearGradient id="g119" gradientUnits="userSpaceOnUse" x1="72.3" x2="417.7"><stop offset="0" stop-color="#00fffa"/><stop offset="0.278" stop-color="#00ffed"/><stop offset="0.287" stop-color="#1affec"/><stop offset="0.322" stop-color="#46ffea"/><stop offset="0.409" stop-color="#88ffe4"/><stop offset="0.591" stop-color="#feffcf"/><stop offset="0.713" stop-color="#ffbf8b"/><stop offset="0.904" stop-color="#ff7c31"/><stop offset="0.948" stop-color="#ff7013"/><stop offset="0.965" stop-color="#ff6b00"/><stop offset="1" stop-color="#ff6100"/></linearGradient><linearGradient id="g120" gradientUnits="userSpaceOnUse" x1="72.7" x2="419.9"><stop offset="0" stop-color="#00fffc"/><stop offset="0.27" stop-color="#00fff0"/><stop offset="0.296" stop-color="#2dffef"/><stop offset="0.348" stop-color="#60ffeb"/><stop offset="0.522" stop-color="#d6ffdc"/><stop offset="0.583" stop-color="#fdffd4"/><stop offset="0.704" stop-color="#ffbf8f"/><stop offset="0.861" stop-color="#ff8547"/><stop offset="0.939" stop-color="#ff6e1b"/><stop offset="0.965" stop-color="#ff6700"/><stop offset="1" stop-color="#ff5d00"/></linearGradient><linearGradient id="g121" gradientUnits="userSpaceOnUse" x1="73.0" x2="422.0"><stop offset="0" stop-color="#00fffe"/><stop offset="0.267" stop-color="#00fff3"/><stop offset="0.293" stop-color="#2efff1"/><stop offset="0.336" stop-color="#5affef"/><stop offset="0.483" stop-color="#c1ffe3"/><stop offset="0.578" stop-color="#ffffd8"/><stop offset="0.672" stop-color="#ffc99e"/><stop offset="0.819" stop-color="#ff8f59"/><stop offset="0.922" stop-color="#ff6f27"/><stop offset="0.948" stop-color="#ff6813"/><stop offset="0.966" stop-color="#ff6300"/><stop offset="1" stop-color="#ff5900"/></linearGradient><linearGradient id="g122" gradientUnits="userSpaceOnUse" x1="73.4" x2="424.2"><stop offset="0" stop-color="#00fdff"/><stop offset="0.267" stop-color="#00fff6"/><stop offset="0.276" stop-color="#17fff5"/><stop offset="0.293" stop-color="#32fff4"/><stop offset="0.345" stop-color="#64fff1"/><stop offset="0.491" stop-color="#cbffe5"/><stop offset="0.569" stop-color="#ffffdd"/><stop offset="0.672" stop-color="#ffc49e"/><stop offset="0.828" stop-color="#ff8855"/><stop offset="0.931" stop-color="#ff6821"/><stop offset="0.966" stop-color="#ff5f00"/><stop offset="1" stop-color="#ff5500"/></linearGradient><linearGradient id="g123" gradientUnits="userSpaceOnUse" x1="73.7" x2="426.4"><stop offset="0" stop-color="#00fbff"/><stop offset="0.239" stop-color="#00fffa"/><stop offset="0.265" stop-color="#00fff9"/><stop offset="0.274" stop-color="#19fff8"/><stop offset="0.299" stop-color="#3dfff7"/><stop offset="0.359" stop-color="#73fff3"/><stop offset="0.556" stop-color="#fbffe2"/><stop offset="0.59" stop-color="#ffeccd"/><stop offset="0.709" stop-color="#ffaf8b"/><stop offset="0.897" stop-color="#ff6e34"/><stop offset="0.949" stop-color="#ff5f13"/><stop offset="0.966" stop-color="#ff5a00"/><stop offset="1" stop-color="#ff5100"/></linearGradient><linearGradient id="g124" gradientUnits="userSpaceOnUse" x1="74.1" x2="428.6"><stop offset="0" stop-color="#00f9ff"/><stop offset="0.263" stop-color="#00fffb"/><stop offset="0.271" stop-color="#1afffb"/><stop offset="0.297" stop-color="#3ffffa"/><stop offset="0.364" stop-color="#7afff6"/><stop offset="0.551" stop-color="#fdffe6"/><stop offset="0.661" stop-color="#ffc1a2"/><stop offset="0.805" stop-color="#ff875f"/><stop offset="0.924" stop-color="#ff6226"/><stop offset="0.949" stop-color="#ff5b13"/><stop offset="0.966" stop-color="#ff5600"/><stop offset="1" stop-color="#ff4c00"/></linearGradient><linearGradient id="g125" gradientUnits="userSpaceOnUse" x1="74.5" x2="430.8"><stop offset="0" stop-color="#00f7ff"/><stop offset="0.254" stop-color="#00ffff"/><stop offset="0.263" stop-color="#0bfffe"/><stop offset="0.271" stop-color="#20fffe"/><stop offset="0.297" stop-color="#43fffd"/><stop offset="0.364" stop-color="#7efff9"/><stop offset="0.542" stop-color="#fdffeb"/><stop offset="0.653" stop-color="#ffc0a6"/><stop offset="0.805" stop-color="#ff835f"/><stop offset="0.924" stop-color="#ff5e26"/><stop offset="0.949" stop-color="#ff5713"/><stop offset="0.966" stop-color="#ff5200"/><stop offset="1" stop-color="#ff4800"/></linearGradient><linearGradient id="g126" gradientUnits="userSpaceOnUse" x1="74.9" x2="432.9"><stop offset="0" stop-color="#00f5ff"/><stop offset="0.252" stop-color="#00fcff"/><stop offset="0.261" stop-color="#0efdff"/><stop offset="0.269" stop-color="#22fdff"/><stop offset="0.303" stop-color="#4cffff"/><stop offset="0.387" stop-color="#92fffb"/><stop offset="0.538" stop-color="#ffffef"/><stop offset="0.622" stop-color="#ffcbb7"/><stop offset="0.756" stop-color="#ff9074"/><stop offset="0.916" stop-color="#ff5c2a"/><stop offset="0.95" stop-color="#ff5212"/><stop offset="0.966" stop-color="#ff4d00"/><stop offset="1" stop-color="#ff4300"/></linearGradient><linearGradient id="g127" gradientUnits="userSpaceOnUse" x1="75.3" x2="435.1"><stop offset="0" stop-color="#00f2ff"/><stop offset="0.252" stop-color="#00f9ff"/><stop offset="0.269" stop-color="#27faff"/><stop offset="0.311" stop-color="#57fcff"/><stop offset="0.403" stop-color="#a3fffd"/><stop offset="0.529" stop-color="#fffff4"/><stop offset="0.613" stop-color="#ffcabb"/><stop offset="0.748" stop-color="#ff8f77"/><stop offset="0.916" stop-color="#ff582a"/><stop offset="0.95" stop-color="#ff4e12"/><stop offset="0.966" stop-color="#ff4800"/><stop offset="1" stop-color="#ff3e00"/></linearGradient><linearGradient id="g128" gradientUnits="userSpaceOnUse" x1="75.7" x2="437.3"><stop offset="0" stop-color="#00f0ff"/><stop offset="0.25" stop-color="#00f7ff"/><stop offset="0.258" stop-color="#18f7ff"/><stop offset="0.283" stop-color="#3ef8ff"/><stop offset="0.358" stop-color="#82fbff"/><stop offset="0.517" stop-color="#fbfffa"/><stop offset="0.542" stop-color="#fff1ea"/><stop offset="0.642" stop-color="#ffb7aa"/><stop offset="0.792" stop-color="#ff7b64"/><stop offset="0.925" stop-color="#ff5125"/><stop offset="0.95" stop-color="#ff4912"/><stop offset="0.967" stop-color="#ff4400"/><stop offset="1" stop-color="#ff3900"/></linearGradient><linearGradient id="g129" gradientUnits="userSpaceOnUse" x1="76.1" x2="439.5"><stop offset="0" stop-color="#00eeff"/><stop offset="0.248" stop-color="#00f4ff"/><stop offset="0.256" stop-color="#1af4ff"/><stop offset="0.281" stop-color="#3ef5ff"/><stop offset="0.355" stop-color="#82f7ff"/><stop offset="0.512" stop-color="#fdfffe"/><stop offset="0.612" stop-color="#ffc2ba"/><stop offset="0.744" stop-color="#ff8878"/><stop offset="0.917" stop-color="#ff4f29"/><stop offset="0.95" stop-color="#ff4412"/><stop offset="0.967" stop-color="#ff3f00"/><stop offset="1" stop-color="#ff3400"/></linearGradient><linearGradient id="g130" gradientUnits="userSpaceOnUse" x1="76.5" x2="441.7"><stop offset="0" stop-color="#00ecff"/><stop offset="0.24" stop-color="#00f1ff"/><stop offset="0.248" stop-color="#0af1ff"/><stop offset="0.256" stop-color="#1ff1ff"/><stop offset="0.281" stop-color="#41f2ff"/><stop offset="0.355" stop-color="#84f4ff"/><stop offset="0.512" stop-color="#fffbfe"/><stop offset="0.603" stop-color="#ffc1be"/><stop offset="0.744" stop-color="#ff8478"/><stop offset="0.917" stop-color="#ff4a29"/><stop offset="0.95" stop-color="#ff3f12"/><stop offset="0.967" stop-color="#ff3900"/><stop offset="1" stop-color="#ff2e00"/></linearGradient><linearGradient id="g131" gradientUnits="userSpaceOnUse" x1="76.9" x2="443.9"><stop offset="0" stop-color="#00eaff"/><stop offset="0.238" stop-color="#00eeff"/><stop offset="0.262" stop-color="#2deeff"/><stop offset="0.303" stop-color="#5aefff"/><stop offset="0.508" stop-color="#fef7ff"/><stop offset="0.598" stop-color="#ffbfc1"/><stop offset="0.73" stop-color="#ff857e"/><stop offset="0.918" stop-color="#ff4529"/><stop offset="0.951" stop-color="#ff3a11"/><stop offset="0.967" stop-color="#ff3400"/><stop offset="1" stop-color="#ff2700"/></linearGradient><linearGradient id="g132" gradientUnits="userSpaceOnUse" x1="77.3" x2="446.1"><stop offset="0" stop-color="#00e8ff"/><stop offset="0.238" stop-color="#00ebff"/><stop offset="0.246" stop-color="#16ebff"/><stop offset="0.27" stop-color="#3becff"/><stop offset="0.328" stop-color="#71edff"/><stop offset="0.508" stop-color="#fff3ff"/><stop offset="0.59" stop-color="#ffbec5"/><stop offset="0.721" stop-color="#ff8481"/><stop offset="0.918" stop-color="#ff4029"/><stop offset="0.951" stop-color="#ff3412"/><stop offset="0.967" stop-color="#ff2e00"/><stop offset="1" stop-color="#ff2000"/></linearGradient><linearGradient id="g133" gradientUnits="userSpaceOnUse" x1="77.7" x2="448.3"><stop offset="0" stop-color="#00e6ff"/><stop offset="0.236" stop-color="#00e8ff"/><stop offset="0.244" stop-color="#17e8ff"/><stop offset="0.268" stop-color="#3ce9ff"/><stop offset="0.333" stop-color="#78eaff"/><stop offset="0.504" stop-color="#fdeeff"/><stop offset="0.61" stop-color="#ffb0b8"/><stop offset="0.756" stop-color="#ff7272"/><stop offset="0.927" stop-color="#ff3724"/><stop offset="0.951" stop-color="#ff2e11"/><stop offset="0.967" stop-color="#ff2700"/><stop offset="1" stop-color="#ff1800"/></linearGradient><linearGradient id="g134" gradientUnits="userSpaceOnUse" x1="78.1" x2="450.5"><stop offset="0" stop-color="#00e3ff"/><stop offset="0.234" stop-color="#00e5ff"/><stop offset="0.242" stop-color="#19e5ff"/><stop offset="0.258" stop-color="#33e6ff"/><stop offset="0.323" stop-color="#71e6ff"/><stop offset="0.5" stop-color="#fbeaff"/><stop offset="0.532" stop-color="#ffd7e9"/><stop offset="0.621" stop-color="#ffa5b1"/><stop offset="0.79" stop-color="#ff6263"/><stop offset="0.919" stop-color="#ff3428"/><stop offset="0.952" stop-color="#ff2711"/><stop offset="0.96" stop-color="#ff2405"/><stop offset="0.976" stop-color="#ff1c00"/><stop offset="1" stop-color="#ff0b00"/></linearGradient><linearGradient id="g135" gradientUnits="userSpaceOnUse" x1="78.5" x2="452.7"><stop offset="0" stop-color="#00e1ff"/><stop offset="0.226" stop-color="#00e2ff"/><stop offset="0.234" stop-color="#0ae2ff"/><stop offset="0.242" stop-color="#1fe3ff"/><stop offset="0.274" stop-color="#48e3ff"/><stop offset="0.363" stop-color="#93e4ff"/><stop offset="0.5" stop-color="#fce5ff"/><stop offset="0.605" stop-color="#ffa8ba"/><stop offset="0.742" stop-color="#ff6f77"/><stop offset="0.919" stop-color="#ff2e28"/><stop offset="0.952" stop-color="#ff2011"/><stop offset="0.96" stop-color="#ff1c05"/><stop offset="0.976" stop-color="#ff1200"/><stop offset="0.992" stop-color="#ff0000"/><stop offset="1" stop-color="#ff0000"/></linearGradient><linearGradient id="g136" gradientUnits="userSpaceOnUse" x1="79.0" x2="454.9"><stop offset="0" stop-color="#00dfff"/><stop offset="0.224" stop-color="#00e0ff"/><stop offset="0.248" stop-color="#2de0ff"/><stop offset="0.304" stop-color="#66e0ff"/><stop offset="0.504" stop-color="#ffdffd"/><stop offset="0.592" stop-color="#ffaac0"/><stop offset="0.736" stop-color="#ff6c79"/><stop offset="0.92" stop-color="#ff2828"/><stop offset="0.952" stop-color="#ff1711"/><stop offset="0.96" stop-color="#ff1105"/><stop offset="0.976" stop-color="#ff0000"/><stop offset="1" stop-color="#ff0000"/></linearGradient><linearGradient id="g137" gradientUnits="userSpaceOnUse" x1="79.4" x2="457.0"><stop offset="0" stop-color="#00ddff"/><stop offset="0.224" stop-color="#00ddff"/><stop offset="0.24" stop-color="#25ddff"/><stop offset="0.28" stop-color="#53ddff"/><stop offset="0.44" stop-color="#d0ddff"/><stop offset="0.496" stop-color="#fcdcff"/><stop offset="0.608" stop-color="#ff9db6"/><stop offset="0.776" stop-color="#ff5968"/><stop offset="0.92" stop-color="#ff2028"/><stop offset="0.952" stop-color="#ff0a11"/><stop offset="0.96" stop-color="#ff0005"/><stop offset="0.976" stop-color="#ff0000"/><stop offset="1" stop-color="#ff0000"/></linearGradient><linearGradient id="g138" gradientUnits="userSpaceOnUse" x1="79.8" x2="459.2"><stop offset="0" stop-color="#00dbff"/><stop offset="0.222" stop-color="#00daff"/><stop offset="0.23" stop-color="#17daff"/><stop offset="0.254" stop-color="#3bdaff"/><stop offset="0.333" stop-color="#81daff"/><stop offset="0.5" stop-color="#ffd7fd"/><stop offset="0.595" stop-color="#ff9fbd"/><stop offset="0.746" stop-color="#ff6074"/><stop offset="0.905" stop-color="#ff2030"/><stop offset="0.937" stop-color="#ff091d"/><stop offset="0.944" stop-color="#ff0018"/><stop offset="0.968" stop-color="#ff0000"/><stop offset="1" stop-color="#ff0000"/></linearGradient><linearGradient id="g139" gradientUnits="userSpaceOnUse" x1="80.3" x2="461.4"><stop offset="0" stop-color="#00d9ff"/><stop offset="0.22" stop-color="#00d7ff"/><stop offset="0.228" stop-color="#19d7ff"/><stop offset="0.252" stop-color="#3bd7ff"/><stop offset="0.323" stop-color="#7bd6ff"/><stop offset="0.496" stop-color="#ffd4ff"/><stop offset="0.583" stop-color="#ffa0c3"/><stop offset="0.732" stop-color="#ff607a"/><stop offset="0.89" stop-color="#ff2037"/><stop offset="0.921" stop-color="#ff0827"/><stop offset="0.929" stop-color="#ff0022"/><stop offset="0.953" stop-color="#ff0010"/><stop offset="0.961" stop-color="#ff0004"/><stop offset="0.992" stop-color="#ff0000"/><stop offset="1" stop-color="#ff0000"/></linearGradient><linearGradient id="g140" gradientUnits="userSpaceOnUse" x1="80.7" x2="463.5"><stop offset="0" stop-color="#00d7ff"/><stop offset="0.213" stop-color="#00d5ff"/><stop offset="0.22" stop-color="#0bd5ff"/><stop offset="0.236" stop-color="#2bd5ff"/><stop offset="0.283" stop-color="#5cd4ff"/><stop offset="0.496" stop-color="#ffcefe"/><stop offset="0.591" stop-color="#ff98be"/><stop offset="0.74" stop-color="#ff5876"/><stop offset="0.874" stop-color="#ff203e"/><stop offset="0.898" stop-color="#ff1033"/><stop offset="0.913" stop-color="#ff002b"/><stop offset="0.953" stop-color="#ff0010"/><stop offset="0.969" stop-color="#ff0000"/><stop offset="1" stop-color="#ff0000"/></linearGradient><linearGradient id="g141" gradientUnits="userSpaceOnUse" x1="81.1" x2="465.7"><stop offset="0" stop-color="#00d5ff"/><stop offset="0.211" stop-color="#00d2ff"/><stop offset="0.234" stop-color="#2cd2ff"/><stop offset="0.281" stop-color="#5dd1ff"/><stop offset="0.492" stop-color="#fecbff"/><stop offset="0.586" stop-color="#ff95c0"/><stop offset="0.719" stop-color="#ff5c7f"/><stop offset="0.859" stop-color="#ff2045"/><stop offset="0.883" stop-color="#ff103a"/><stop offset="0.898" stop-color="#ff0033"/><stop offset="0.945" stop-color="#ff0017"/><stop offset="0.961" stop-color="#ff0004"/><stop offset="0.992" stop-color="#ff0000"/><stop offset="1" stop-color="#ff0000"/></linearGradient><linearGradient id="g142" gradientUnits="userSpaceOnUse" x1="81.6" x2="467.9"><stop offset="0" stop-color="#00d3ff"/><stop offset="0.211" stop-color="#00cfff"/><stop offset="0.227" stop-color="#24cfff"/><stop offset="0.266" stop-color="#51ceff"/><stop offset="0.406" stop-color="#becaff"/><stop offset="0.492" stop-color="#ffc6fe"/><stop offset="0.586" stop-color="#ff90bf"/><stop offset="0.742" stop-color="#ff4d75"/><stop offset="0.852" stop-color="#ff1c48"/><stop offset="0.883" stop-color="#ff003a"/><stop offset="0.945" stop-color="#ff0017"/><stop offset="0.969" stop-color="#ff0000"/><stop offset="1" stop-color="#ff0000"/></linearGradient><linearGradient id="g143" gradientUnits="userSpaceOnUse" x1="82.0" x2="470.1"><stop offset="0" stop-color="#00d1ff"/><stop offset="0.209" stop-color="#00cdff"/><stop offset="0.217" stop-color="#18cdff"/><stop offset="0.248" stop-color="#42ccff"/><stop offset="0.333" stop-color="#8ac9ff"/><stop offset="0.488" stop-color="#fec2ff"/><stop offset="0.589" stop-color="#ff8abd"/><stop offset="0.736" stop-color="#ff4b77"/><stop offset="0.837" stop-color="#ff1b4e"/><stop offset="0.853" stop-color="#ff0f47"/><stop offset="0.86" stop-color="#ff0444"/><stop offset="0.891" stop-color="#ff0036"/><stop offset="0.946" stop-color="#ff0017"/><stop offset="0.961" stop-color="#ff0004"/><stop offset="0.984" stop-color="#ff0000"/><stop offset="1" stop-color="#ff0000"/></linearGradient><linearGradient id="g144" gradientUnits="userSpaceOnUse" x1="82.5" x2="472.3"><stop offset="0" stop-color="#00ceff"/><stop offset="0.202" stop-color="#00caff"/><stop offset="0.209" stop-color="#08caff"/><stop offset="0.217" stop-color="#1dcaff"/><stop offset="0.248" stop-color="#45c9ff"/><stop offset="0.341" stop-color="#91c6ff"/><stop offset="0.488" stop-color="#ffbeff"/><stop offset="0.574" stop-color="#ff8dc5"/><stop offset="0.713" stop-color="#ff4f80"/><stop offset="0.822" stop-color="#ff1c54"/><stop offset="0.853" stop-color="#ff0047"/><stop offset="0.938" stop-color="#ff001d"/><stop offset="0.953" stop-color="#ff0010"/><stop offset="0.961" stop-color="#ff0004"/><stop offset="0.984" stop-color="#ff0000"/><stop offset="1" stop-color="#ff0000"/></linearGradient><linearGradient id="g145" gradientUnits="userSpaceOnUse" x1="82.9" x2="474.5"><stop offset="0" stop-color="#00ccff"/><stop offset="0.2" stop-color="#00c8ff"/><stop offset="0.223" stop-color="#2ac7ff"/><stop offset="0.269" stop-color="#5bc5ff"/><stop offset="0.485" stop-color="#fdb9ff"/><stop offset="0.592" stop-color="#ff7fba"/><stop offset="0.746" stop-color="#ff3b72"/><stop offset="0.808" stop-color="#ff1b59"/><stop offset="0.823" stop-color="#ff0f53"/><stop offset="0.831" stop-color="#ff0150"/><stop offset="0.931" stop-color="#ff0021"/><stop offset="0.954" stop-color="#ff0010"/><stop offset="0.962" stop-color="#ff0003"/><stop offset="1" stop-color="#ff0000"/></linearGradient><linearGradient id="g146" gradientUnits="userSpaceOnUse" x1="83.4" x2="476.6"><stop offset="0" stop-color="#00caff"/><stop offset="0.198" stop-color="#00c5ff"/><stop offset="0.221" stop-color="#2cc4ff"/><stop offset="0.267" stop-color="#5bc2ff"/><stop offset="0.489" stop-color="#ffb3fc"/><stop offset="0.573" stop-color="#ff83c4"/><stop offset="0.718" stop-color="#ff427e"/><stop offset="0.802" stop-color="#ff155c"/><stop offset="0.817" stop-color="#ff0056"/><stop offset="0.931" stop-color="#ff0021"/><stop offset="0.954" stop-color="#ff000f"/><stop offset="0.962" stop-color="#ff0003"/><stop offset="1" stop-color="#ff0000"/></linearGradient><linearGradient id="g147" gradientUnits="userSpaceOnUse" x1="83.8" x2="478.8"><stop offset="0" stop-color="#00c8ff"/><stop offset="0.198" stop-color="#00c2ff"/><stop offset="0.206" stop-color="#16c2ff"/><stop offset="0.229" stop-color="#38c1ff"/><stop offset="0.29" stop-color="#6fbeff"/><stop offset="0.481" stop-color="#fdb1ff"/><stop offset="0.588" stop-color="#ff77bb"/><stop offset="0.748" stop-color="#ff2d71"/><stop offset="0.794" stop-color="#ff0e5f"/><stop offset="0.802" stop-color="#ff005c"/><stop offset="0.931" stop-color="#ff0021"/><stop offset="0.954" stop-color="#ff000f"/><stop offset="0.962" stop-color="#ff0003"/><stop offset="1" stop-color="#ff0000"/></linearGradient><linearGradient id="g148" gradientUnits="userSpaceOnUse" x1="84.3" x2="481.0"><stop offset="0" stop-color="#00c6ff"/><stop offset="0.197" stop-color="#00c0ff"/><stop offset="0.205" stop-color="#18bfff"/><stop offset="0.227" stop-color="#39beff"/><stop offset="0.288" stop-color="#6fbbff"/><stop offset="0.485" stop-color="#ffaafd"/><stop offset="0.568" stop-color="#ff7bc5"/><stop offset="0.705" stop-color="#ff3c83"/><stop offset="0.765" stop-color="#ff1a6a"/><stop offset="0.78" stop-color="#ff0d64"/><stop offset="0.788" stop-color="#ff0061"/><stop offset="0.924" stop-color="#ff0025"/><stop offset="0.955" stop-color="#ff000f"/><stop offset="0.962" stop-color="#ff0003"/><stop offset="1" stop-color="#ff0000"/></linearGradient><linearGradient id="g149" gradientUnits="userSpaceOnUse" x1="84.8" x2="483.2"><stop offset="0" stop-color="#00c4ff"/><stop offset="0.189" stop-color="#00bdff"/><stop offset="0.197" stop-color="#0abdff"/><stop offset="0.205" stop-color="#1dbdff"/><stop offset="0.235" stop-color="#43bbff"/><stop offset="0.303" stop-color="#7db7ff"/><stop offset="0.477" stop-color="#fda8ff"/><stop offset="0.591" stop-color="#ff6bb8"/><stop offset="0.735" stop-color="#ff2576"/><stop offset="0.765" stop-color="#ff0d6a"/><stop offset="0.773" stop-color="#ff0067"/><stop offset="0.924" stop-color="#ff0025"/><stop offset="0.955" stop-color="#ff000f"/><stop offset="0.962" stop-color="#ff0003"/><stop offset="1" stop-color="#ff0000"/></linearGradient><linearGradient id="g150" gradientUnits="userSpaceOnUse" x1="85.3" x2="485.3"><stop offset="0" stop-color="#00c2ff"/><stop offset="0.188" stop-color="#00bbff"/><stop offset="0.203" stop-color="#1fbaff"/><stop offset="0.233" stop-color="#44b8ff"/><stop offset="0.331" stop-color="#93b2ff"/><stop offset="0.481" stop-color="#ffa1fd"/><stop offset="0.571" stop-color="#ff6fc2"/><stop offset="0.714" stop-color="#ff297e"/><stop offset="0.752" stop-color="#ff0c6f"/><stop offset="0.759" stop-color="#ff006c"/><stop offset="0.925" stop-color="#ff0025"/><stop offset="0.955" stop-color="#ff000f"/><stop offset="0.962" stop-color="#ff0003"/><stop offset="1" stop-color="#ff0000"/></linearGradient><linearGradient id="g151" gradientUnits="userSpaceOnUse" x1="85.8" x2="487.6"><stop offset="0" stop-color="#00c0ff"/><stop offset="0.188" stop-color="#00b8ff"/><stop offset="0.195" stop-color="#15b8ff"/><stop offset="0.218" stop-color="#37b6ff"/><stop offset="0.278" stop-color="#6db3ff"/><stop offset="0.474" stop-color="#fc9fff"/><stop offset="0.594" stop-color="#ff5fb5"/><stop offset="0.714" stop-color="#ff207e"/><stop offset="0.737" stop-color="#ff0d75"/><stop offset="0.744" stop-color="#ff0072"/><stop offset="0.925" stop-color="#ff0025"/><stop offset="0.955" stop-color="#ff000f"/><stop offset="0.962" stop-color="#ff0003"/><stop offset="1" stop-color="#ff0000"/></linearGradient><linearGradient id="g152" gradientUnits="userSpaceOnUse" x1="86.2" x2="489.7"><stop offset="0" stop-color="#00beff"/><stop offset="0.187" stop-color="#00b5ff"/><stop offset="0.194" stop-color="#17b5ff"/><stop offset="0.216" stop-color="#38b4ff"/><stop offset="0.291" stop-color="#79afff"/><stop offset="0.478" stop-color="#ff99fe"/><stop offset="0.567" stop-color="#ff67c3"/><stop offset="0.701" stop-color="#ff2083"/><stop offset="0.724" stop-color="#ff0b7a"/><stop offset="0.731" stop-color="#ff0077"/><stop offset="0.91" stop-color="#ff002c"/><stop offset="0.955" stop-color="#ff000f"/><stop offset="0.963" stop-color="#ff0002"/><stop offset="1" stop-color="#ff0000"/></linearGradient><linearGradient id="g153" gradientUnits="userSpaceOnUse" x1="86.7" x2="491.9"><stop offset="0" stop-color="#00bcff"/><stop offset="0.185" stop-color="#00b3ff"/><stop offset="0.193" stop-color="#19b2ff"/><stop offset="0.215" stop-color="#38b1ff"/><stop offset="0.267" stop-color="#67adff"/><stop offset="0.459" stop-color="#f398ff"/><stop offset="0.474" stop-color="#ff95ff"/><stop offset="0.556" stop-color="#ff67c9"/><stop offset="0.681" stop-color="#ff248b"/><stop offset="0.711" stop-color="#ff097f"/><stop offset="0.719" stop-color="#ff007b"/><stop offset="0.919" stop-color="#ff0028"/><stop offset="0.956" stop-color="#ff000e"/><stop offset="0.963" stop-color="#ff0001"/><stop offset="1" stop-color="#ff0000"/></linearGradient><linearGradient id="g154" gradientUnits="userSpaceOnUse" x1="87.2" x2="494.1"><stop offset="0" stop-color="#00baff"/><stop offset="0.178" stop-color="#00b1ff"/><stop offset="0.2" stop-color="#29afff"/><stop offset="0.244" stop-color="#57acff"/><stop offset="0.4" stop-color="#c99cff"/><stop offset="0.474" stop-color="#ff90fe"/><stop offset="0.563" stop-color="#ff5ec4"/><stop offset="0.674" stop-color="#ff208e"/><stop offset="0.696" stop-color="#ff0a84"/><stop offset="0.704" stop-color="#ff0081"/><stop offset="0.919" stop-color="#ff0028"/><stop offset="0.956" stop-color="#ff000f"/><stop offset="0.963" stop-color="#ff0002"/><stop offset="1" stop-color="#ff0000"/></linearGradient><linearGradient id="g155" gradientUnits="userSpaceOnUse" x1="87.8" x2="494.1"><stop offset="0" stop-color="#00b8ff"/><stop offset="0.178" stop-color="#00aeff"/><stop offset="0.193" stop-color="#20adff"/><stop offset="0.23" stop-color="#4baaff"/><stop offset="0.326" stop-color="#95a2ff"/><stop offset="0.474" stop-color="#ff8cff"/><stop offset="0.563" stop-color="#ff5ac5"/><stop offset="0.667" stop-color="#ff1e92"/><stop offset="0.681" stop-color="#ff108c"/><stop offset="0.689" stop-color="#ff0389"/><stop offset="0.926" stop-color="#ff0027"/><stop offset="0.963" stop-color="#ff000c"/><stop offset="0.97" stop-color="#ff0000"/><stop offset="1" stop-color="#ff0000"/></linearGradient><linearGradient id="g156" gradientUnits="userSpaceOnUse" x1="88.3" x2="489.7"><stop offset="0" stop-color="#00b5ff"/><stop offset="0.18" stop-color="#00abff"/><stop offset="0.188" stop-color="#17abff"/><stop offset="0.218" stop-color="#3fa9ff"/><stop offset="0.293" stop-color="#7ca2ff"/><stop offset="0.474" stop-color="#fa88ff"/><stop offset="0.489" stop-color="#ff82f8"/><stop offset="0.594" stop-color="#ff48b9"/><stop offset="0.669" stop-color="#ff1a95"/><stop offset="0.692" stop-color="#ff008c"/><stop offset="0.94" stop-color="#ff0027"/><stop offset="0.977" stop-color="#ff000d"/><stop offset="0.985" stop-color="#ff0000"/><stop offset="1" stop-color="#ff0000"/></linearGradient><linearGradient id="g157" gradientUnits="userSpaceOnUse" x1="88.8" x2="485.1"><stop offset="0" stop-color="#00b3ff"/><stop offset="0.182" stop-color="#00a9ff"/><stop offset="0.189" stop-color="#18a8ff"/><stop offset="0.212" stop-color="#37a7ff"/><stop offset="0.28" stop-color="#71a1ff"/><stop offset="0.477" stop-color="#f884ff"/><stop offset="0.492" stop-color="#ff7ffb"/><stop offset="0.591" stop-color="#ff49bf"/><stop offset="0.667" stop-color="#ff1a9b"/><stop offset="0.689" stop-color="#ff0091"/><stop offset="0.955" stop-color="#ff0028"/><stop offset="0.992" stop-color="#ff000f"/><stop offset="1" stop-color="#ff0005"/></linearGradient><linearGradient id="g158" gradientUnits="userSpaceOnUse" x1="89.3" x2="480.4"><stop offset="0" stop-color="#00b1ff"/><stop offset="0.177" stop-color="#00a7ff"/><stop offset="0.185" stop-color="#0aa6ff"/><stop offset="0.192" stop-color="#1ca6ff"/><stop offset="0.223" stop-color="#41a3ff"/><stop offset="0.308" stop-color="#829bff"/><stop offset="0.477" stop-color="#f381ff"/><stop offset="0.492" stop-color="#fe7dff"/><stop offset="0.6" stop-color="#ff43bf"/><stop offset="0.669" stop-color="#ff159e"/><stop offset="0.685" stop-color="#ff0098"/><stop offset="0.977" stop-color="#ff0025"/><stop offset="1" stop-color="#ff0017"/></linearGradient><linearGradient id="g159" gradientUnits="userSpaceOnUse" x1="89.8" x2="475.7"><stop offset="0" stop-color="#00afff"/><stop offset="0.18" stop-color="#00a4ff"/><stop offset="0.195" stop-color="#20a3ff"/><stop offset="0.234" stop-color="#4aa0ff"/><stop offset="0.344" stop-color="#9794ff"/><stop offset="0.5" stop-color="#ff78ff"/><stop offset="0.609" stop-color="#ff3cbf"/><stop offset="0.664" stop-color="#ff18a5"/><stop offset="0.672" stop-color="#ff0fa2"/><stop offset="0.68" stop-color="#ff009f"/><stop offset="0.992" stop-color="#ff0026"/><stop offset="1" stop-color="#ff0022"/></linearGradient><linearGradient id="g160" gradientUnits="userSpaceOnUse" x1="90.4" x2="471.0"><stop offset="0" stop-color="#00adff"/><stop offset="0.183" stop-color="#00a1ff"/><stop offset="0.19" stop-color="#16a1ff"/><stop offset="0.214" stop-color="#369fff"/><stop offset="0.286" stop-color="#6f98ff"/><stop offset="0.46" stop-color="#df7eff"/><stop offset="0.508" stop-color="#ff73ff"/><stop offset="0.603" stop-color="#ff3fc7"/><stop offset="0.659" stop-color="#ff1aac"/><stop offset="0.683" stop-color="#ff00a2"/><stop offset="1" stop-color="#ff002b"/></linearGradient><linearGradient id="g161" gradientUnits="userSpaceOnUse" x1="90.9" x2="466.3"><stop offset="0" stop-color="#00abff"/><stop offset="0.184" stop-color="#009fff"/><stop offset="0.192" stop-color="#189eff"/><stop offset="0.224" stop-color="#3e9cff"/><stop offset="0.304" stop-color="#7993ff"/><stop offset="0.48" stop-color="#e877ff"/><stop offset="0.52" stop-color="#ff6bfc"/><stop offset="0.632" stop-color="#ff2cbd"/><stop offset="0.664" stop-color="#ff12af"/><stop offset="0.672" stop-color="#ff05ab"/><stop offset="0.688" stop-color="#ff00a4"/><stop offset="1" stop-color="#ff0032"/></linearGradient><linearGradient id="g162" gradientUnits="userSpaceOnUse" x1="91.4" x2="461.7"><stop offset="0" stop-color="#00a9ff"/><stop offset="0.179" stop-color="#009dff"/><stop offset="0.187" stop-color="#0a9cff"/><stop offset="0.195" stop-color="#1c9cff"/><stop offset="0.236" stop-color="#4798ff"/><stop offset="0.35" stop-color="#948bff"/><stop offset="0.504" stop-color="#f36eff"/><stop offset="0.528" stop-color="#ff65fb"/><stop offset="0.642" stop-color="#ff23bd"/><stop offset="0.667" stop-color="#ff0bb2"/><stop offset="0.675" stop-color="#ff00af"/><stop offset="0.87" stop-color="#ff0066"/><stop offset="1" stop-color="#ff0039"/></linearGradient><linearGradient id="g163" gradientUnits="userSpaceOnUse" x1="92.0" x2="457.0"><stop offset="0" stop-color="#00a7ff"/><stop offset="0.182" stop-color="#009aff"/><stop offset="0.198" stop-color="#1f99ff"/><stop offset="0.231" stop-color="#4296ff"/><stop offset="0.339" stop-color="#8b8aff"/><stop offset="0.504" stop-color="#ee6bff"/><stop offset="0.529" stop-color="#fe63ff"/><stop offset="0.645" stop-color="#ff1fc1"/><stop offset="0.661" stop-color="#ff0fb9"/><stop offset="0.669" stop-color="#ff00b6"/><stop offset="0.843" stop-color="#ff0074"/><stop offset="1" stop-color="#ff0040"/></linearGradient><linearGradient id="g164" gradientUnits="userSpaceOnUse" x1="92.6" x2="452.3"><stop offset="0" stop-color="#00a5ff"/><stop offset="0.185" stop-color="#0098ff"/><stop offset="0.193" stop-color="#1697ff"/><stop offset="0.218" stop-color="#3595ff"/><stop offset="0.286" stop-color="#688eff"/><stop offset="0.479" stop-color="#da6eff"/><stop offset="0.538" stop-color="#fe5eff"/><stop offset="0.639" stop-color="#ff21c8"/><stop offset="0.655" stop-color="#ff12c1"/><stop offset="0.664" stop-color="#ff02bd"/><stop offset="0.849" stop-color="#ff0077"/><stop offset="1" stop-color="#ff0046"/></linearGradient><linearGradient id="g165" gradientUnits="userSpaceOnUse" x1="93.1" x2="447.6"><stop offset="0" stop-color="#00a3ff"/><stop offset="0.186" stop-color="#0095ff"/><stop offset="0.195" stop-color="#1794ff"/><stop offset="0.212" stop-color="#2d93ff"/><stop offset="0.271" stop-color="#5c8dff"/><stop offset="0.466" stop-color="#cf6eff"/><stop offset="0.551" stop-color="#ff55fd"/><stop offset="0.636" stop-color="#ff22cf"/><stop offset="0.653" stop-color="#ff12c7"/><stop offset="0.661" stop-color="#ff00c3"/><stop offset="0.831" stop-color="#ff0082"/><stop offset="1" stop-color="#ff004c"/></linearGradient><linearGradient id="g166" gradientUnits="userSpaceOnUse" x1="93.7" x2="442.9"><stop offset="0" stop-color="#00a0ff"/><stop offset="0.181" stop-color="#0093ff"/><stop offset="0.216" stop-color="#3090ff"/><stop offset="0.293" stop-color="#6987ff"/><stop offset="0.466" stop-color="#ca6bff"/><stop offset="0.56" stop-color="#ff4efc"/><stop offset="0.638" stop-color="#ff1dd3"/><stop offset="0.664" stop-color="#ff00c7"/><stop offset="0.845" stop-color="#ff0082"/><stop offset="1" stop-color="#ff0052"/></linearGradient><linearGradient id="g167" gradientUnits="userSpaceOnUse" x1="94.3" x2="438.3"><stop offset="0" stop-color="#009eff"/><stop offset="0.184" stop-color="#0090ff"/><stop offset="0.202" stop-color="#1f8fff"/><stop offset="0.246" stop-color="#488aff"/><stop offset="0.386" stop-color="#9c78ff"/><stop offset="0.535" stop-color="#ee55ff"/><stop offset="0.57" stop-color="#ff47fb"/><stop offset="0.632" stop-color="#ff20db"/><stop offset="0.649" stop-color="#ff0ed2"/><stop offset="0.658" stop-color="#ff00ce"/><stop offset="0.842" stop-color="#ff0088"/><stop offset="1" stop-color="#ff0058"/></linearGradient><linearGradient id="g168" gradientUnits="userSpaceOnUse" x1="94.8" x2="433.6"><stop offset="0" stop-color="#009cff"/><stop offset="0.188" stop-color="#008eff"/><stop offset="0.196" stop-color="#168dff"/><stop offset="0.232" stop-color="#3c89ff"/><stop offset="0.339" stop-color="#807cff"/><stop offset="0.5" stop-color="#d65dff"/><stop offset="0.571" stop-color="#fe45ff"/><stop offset="0.634" stop-color="#ff1bdf"/><stop offset="0.643" stop-color="#ff11da"/><stop offset="0.652" stop-color="#ff00d6"/><stop offset="0.821" stop-color="#ff0094"/><stop offset="1" stop-color="#ff005d"/></linearGradient><linearGradient id="g169" gradientUnits="userSpaceOnUse" x1="95.4" x2="428.9"><stop offset="0" stop-color="#009aff"/><stop offset="0.189" stop-color="#008bff"/><stop offset="0.198" stop-color="#188aff"/><stop offset="0.234" stop-color="#3c87ff"/><stop offset="0.324" stop-color="#757cff"/><stop offset="0.505" stop-color="#d459ff"/><stop offset="0.586" stop-color="#ff3bfd"/><stop offset="0.631" stop-color="#ff1be5"/><stop offset="0.64" stop-color="#ff11e1"/><stop offset="0.649" stop-color="#ff00dd"/><stop offset="0.793" stop-color="#ff00a3"/><stop offset="1" stop-color="#ff0063"/></linearGradient><linearGradient id="g170" gradientUnits="userSpaceOnUse" x1="96.0" x2="424.2"><stop offset="0" stop-color="#0098ff"/><stop offset="0.183" stop-color="#0089ff"/><stop offset="0.211" stop-color="#2687ff"/><stop offset="0.275" stop-color="#577fff"/><stop offset="0.459" stop-color="#b861ff"/><stop offset="0.569" stop-color="#f240ff"/><stop offset="0.596" stop-color="#ff32fd"/><stop offset="0.633" stop-color="#ff15e9"/><stop offset="0.642" stop-color="#ff06e5"/><stop offset="0.661" stop-color="#ff00dc"/><stop offset="0.817" stop-color="#ff00a0"/><stop offset="1" stop-color="#ff0068"/></linearGradient><linearGradient id="g171" gradientUnits="userSpaceOnUse" x1="96.6" x2="419.5"><stop offset="0" stop-color="#0096ff"/><stop offset="0.187" stop-color="#0087ff"/><stop offset="0.206" stop-color="#1f85ff"/><stop offset="0.243" stop-color="#4081ff"/><stop offset="0.346" stop-color="#7d73ff"/><stop offset="0.495" stop-color="#c755ff"/><stop offset="0.579" stop-color="#f338ff"/><stop offset="0.607" stop-color="#ff28fc"/><stop offset="0.636" stop-color="#ff0cee"/><stop offset="0.645" stop-color="#ff00e9"/><stop offset="0.794" stop-color="#ff00ac"/><stop offset="1" stop-color="#ff006d"/></linearGradient><linearGradient id="g172" gradientUnits="userSpaceOnUse" x1="97.2" x2="414.9"><stop offset="0" stop-color="#0093ff"/><stop offset="0.19" stop-color="#0084ff"/><stop offset="0.2" stop-color="#1783ff"/><stop offset="0.229" stop-color="#3480ff"/><stop offset="0.305" stop-color="#6577ff"/><stop offset="0.495" stop-color="#c353ff"/><stop offset="0.581" stop-color="#ee34ff"/><stop offset="0.619" stop-color="#ff1bfb"/><stop offset="0.629" stop-color="#ff11f7"/><stop offset="0.638" stop-color="#ff00f2"/><stop offset="0.771" stop-color="#ff00b9"/><stop offset="1" stop-color="#ff0073"/></linearGradient><linearGradient id="g173" gradientUnits="userSpaceOnUse" x1="97.8" x2="410.2"><stop offset="0" stop-color="#0091ff"/><stop offset="0.192" stop-color="#0381ff"/><stop offset="0.202" stop-color="#1880ff"/><stop offset="0.24" stop-color="#3c7cff"/><stop offset="0.346" stop-color="#786eff"/><stop offset="0.51" stop-color="#c74cff"/><stop offset="0.596" stop-color="#f128ff"/><stop offset="0.615" stop-color="#fb1bff"/><stop offset="0.635" stop-color="#ff00f9"/><stop offset="0.788" stop-color="#ff00b8"/><stop offset="1" stop-color="#ff0078"/></linearGradient><linearGradient id="g174" gradientUnits="userSpaceOnUse" x1="98.5" x2="405.5"><stop offset="0" stop-color="#008fff"/><stop offset="0.186" stop-color="#007fff"/><stop offset="0.216" stop-color="#277cff"/><stop offset="0.284" stop-color="#5674ff"/><stop offset="0.461" stop-color="#ac56ff"/><stop offset="0.559" stop-color="#da38ff"/><stop offset="0.608" stop-color="#f21dff"/><stop offset="0.618" stop-color="#f713ff"/><stop offset="0.627" stop-color="#fc00ff"/><stop offset="0.814" stop-color="#ff00b5"/><stop offset="1" stop-color="#ff007d"/></linearGradient><linearGradient id="g175" gradientUnits="userSpaceOnUse" x1="99.1" x2="400.8"><stop offset="0" stop-color="#008dff"/><stop offset="0.19" stop-color="#007dff"/><stop offset="0.21" stop-color="#207bff"/><stop offset="0.26" stop-color="#4675ff"/><stop offset="0.42" stop-color="#975cff"/><stop offset="0.54" stop-color="#cd3cff"/><stop offset="0.6" stop-color="#e91eff"/><stop offset="0.63" stop-color="#f800ff"/><stop offset="0.66" stop-color="#ff00f8"/><stop offset="0.81" stop-color="#ff00bb"/><stop offset="1" stop-color="#ff0083"/></linearGradient><linearGradient id="g176" gradientUnits="userSpaceOnUse" x1="99.8" x2="396.1"><stop offset="0" stop-color="#008bff"/><stop offset="0.194" stop-color="#007aff"/><stop offset="0.204" stop-color="#1879ff"/><stop offset="0.245" stop-color="#3b74ff"/><stop offset="0.347" stop-color="#7366ff"/><stop offset="0.5" stop-color="#b746ff"/><stop offset="0.571" stop-color="#d72cff"/><stop offset="0.602" stop-color="#e519ff"/><stop offset="0.622" stop-color="#ef00ff"/><stop offset="0.663" stop-color="#ff00fc"/><stop offset="0.827" stop-color="#ff00bb"/><stop offset="1" stop-color="#ff0088"/></linearGradient><linearGradient id="g177" gradientUnits="userSpaceOnUse" x1="100.4" x2="391.5"><stop offset="0" stop-color="#0088ff"/><stop offset="0.186" stop-color="#0078ff"/><stop offset="0.196" stop-color="#0877ff"/><stop offset="0.206" stop-color="#1976ff"/><stop offset="0.247" stop-color="#3c71ff"/><stop offset="0.371" stop-color="#7c60ff"/><stop offset="0.515" stop-color="#ba3eff"/><stop offset="0.577" stop-color="#d525ff"/><stop offset="0.608" stop-color="#e30dff"/><stop offset="0.619" stop-color="#e800ff"/><stop offset="0.67" stop-color="#ff00fe"/><stop offset="0.825" stop-color="#ff00c1"/><stop offset="1" stop-color="#ff008d"/></linearGradient><linearGradient id="g178" gradientUnits="userSpaceOnUse" x1="101.1" x2="386.8"><stop offset="0" stop-color="#0086ff"/><stop offset="0.189" stop-color="#0075ff"/><stop offset="0.211" stop-color="#1d73ff"/><stop offset="0.263" stop-color="#446dff"/><stop offset="0.4" stop-color="#8658ff"/><stop offset="0.526" stop-color="#bb38ff"/><stop offset="0.589" stop-color="#d61aff"/><stop offset="0.611" stop-color="#df00ff"/><stop offset="0.684" stop-color="#ff00fe"/><stop offset="0.853" stop-color="#ff00bd"/><stop offset="1" stop-color="#ff0093"/></linearGradient><linearGradient id="g179" gradientUnits="userSpaceOnUse" x1="101.8" x2="382.1"><stop offset="0" stop-color="#0084ff"/><stop offset="0.194" stop-color="#0073ff"/><stop offset="0.204" stop-color="#1571ff"/><stop offset="0.247" stop-color="#396cff"/><stop offset="0.344" stop-color="#6b5fff"/><stop offset="0.505" stop-color="#af3cff"/><stop offset="0.581" stop-color="#ce1cff"/><stop offset="0.602" stop-color="#d705ff"/><stop offset="0.624" stop-color="#e000ff"/><stop offset="0.699" stop-color="#ff00fd"/><stop offset="0.86" stop-color="#ff00c1"/><stop offset="1" stop-color="#ff0098"/></linearGradient><linearGradient id="g180" gradientUnits="userSpaceOnUse" x1="102.5" x2="377.4"><stop offset="0" stop-color="#0081ff"/><stop offset="0.187" stop-color="#0071ff"/><stop offset="0.198" stop-color="#0870ff"/><stop offset="0.209" stop-color="#196eff"/><stop offset="0.253" stop-color="#3b69ff"/><stop offset="0.363" stop-color="#7159ff"/><stop offset="0.505" stop-color="#ac39ff"/><stop offset="0.571" stop-color="#c61dff"/><stop offset="0.604" stop-color="#d300ff"/><stop offset="0.714" stop-color="#ff00fc"/><stop offset="0.89" stop-color="#ff00bd"/><stop offset="1" stop-color="#ff009e"/></linearGradient><linearGradient id="g181" gradientUnits="userSpaceOnUse" x1="103.2" x2="372.7"><stop offset="0" stop-color="#007fff"/><stop offset="0.191" stop-color="#006eff"/><stop offset="0.213" stop-color="#1d6bff"/><stop offset="0.27" stop-color="#4464ff"/><stop offset="0.438" stop-color="#8e48ff"/><stop offset="0.551" stop-color="#ba25ff"/><stop offset="0.584" stop-color="#c70fff"/><stop offset="0.596" stop-color="#cb00ff"/><stop offset="0.719" stop-color="#fe00ff"/><stop offset="0.899" stop-color="#ff00c0"/><stop offset="1" stop-color="#ff00a4"/></linearGradient><linearGradient id="g182" gradientUnits="userSpaceOnUse" x1="104.0" x2="368.1"><stop offset="0" stop-color="#007dff"/><stop offset="0.193" stop-color="#006bff"/><stop offset="0.216" stop-color="#1f68ff"/><stop offset="0.295" stop-color="#505eff"/><stop offset="0.455" stop-color="#9241ff"/><stop offset="0.545" stop-color="#b423ff"/><stop offset="0.58" stop-color="#c10dff"/><stop offset="0.591" stop-color="#c500ff"/><stop offset="0.739" stop-color="#ff00fe"/><stop offset="0.92" stop-color="#ff00bf"/><stop offset="1" stop-color="#ff00a9"/></linearGradient><linearGradient id="g183" gradientUnits="userSpaceOnUse" x1="104.7" x2="363.4"><stop offset="0" stop-color="#007aff"/><stop offset="0.198" stop-color="#0168ff"/><stop offset="0.209" stop-color="#1767ff"/><stop offset="0.256" stop-color="#3a61ff"/><stop offset="0.384" stop-color="#744dff"/><stop offset="0.512" stop-color="#a42eff"/><stop offset="0.57" stop-color="#b910ff"/><stop offset="0.581" stop-color="#be00ff"/><stop offset="0.756" stop-color="#ff00fd"/><stop offset="0.942" stop-color="#ff00bf"/><stop offset="1" stop-color="#ff00af"/></linearGradient><linearGradient id="g184" gradientUnits="userSpaceOnUse" x1="105.5" x2="358.7"><stop offset="0" stop-color="#0078ff"/><stop offset="0.19" stop-color="#0066ff"/><stop offset="0.226" stop-color="#2562ff"/><stop offset="0.298" stop-color="#4e59ff"/><stop offset="0.464" stop-color="#9039ff"/><stop offset="0.536" stop-color="#a920ff"/><stop offset="0.56" stop-color="#b213ff"/><stop offset="0.571" stop-color="#b606ff"/><stop offset="0.595" stop-color="#be00ff"/><stop offset="0.774" stop-color="#ff00fd"/><stop offset="0.952" stop-color="#ff00c2"/><stop offset="1" stop-color="#ff00b5"/></linearGradient><linearGradient id="g185" gradientUnits="userSpaceOnUse" x1="106.2" x2="354.0"><stop offset="0" stop-color="#0076ff"/><stop offset="0.195" stop-color="#0063ff"/><stop offset="0.207" stop-color="#1362ff"/><stop offset="0.256" stop-color="#375cff"/><stop offset="0.378" stop-color="#6d49ff"/><stop offset="0.512" stop-color="#9e27ff"/><stop offset="0.561" stop-color="#ae0bff"/><stop offset="0.573" stop-color="#b300ff"/><stop offset="0.78" stop-color="#fe00ff"/><stop offset="0.988" stop-color="#ff00be"/><stop offset="1" stop-color="#ff00bb"/></linearGradient><linearGradient id="g186" gradientUnits="userSpaceOnUse" x1="107.0" x2="349.3"><stop offset="0" stop-color="#0073ff"/><stop offset="0.187" stop-color="#0061ff"/><stop offset="0.2" stop-color="#0560ff"/><stop offset="0.213" stop-color="#185fff"/><stop offset="0.263" stop-color="#3a58ff"/><stop offset="0.438" stop-color="#813aff"/><stop offset="0.525" stop-color="#9f1eff"/><stop offset="0.55" stop-color="#a70fff"/><stop offset="0.562" stop-color="#ab00ff"/><stop offset="0.8" stop-color="#fe00ff"/><stop offset="1" stop-color="#ff00c1"/></linearGradient><linearGradient id="g187" gradientUnits="userSpaceOnUse" x1="107.8" x2="344.7"><stop offset="0" stop-color="#0071ff"/><stop offset="0.192" stop-color="#005eff"/><stop offset="0.231" stop-color="#265aff"/><stop offset="0.321" stop-color="#534dff"/><stop offset="0.474" stop-color="#8b2dff"/><stop offset="0.538" stop-color="#a011ff"/><stop offset="0.551" stop-color="#a403ff"/><stop offset="0.821" stop-color="#ff00ff"/><stop offset="1" stop-color="#ff00c7"/></linearGradient><linearGradient id="g188" gradientUnits="userSpaceOnUse" x1="108.5" x2="340.0"><stop offset="0" stop-color="#006eff"/><stop offset="0.195" stop-color="#005bff"/><stop offset="0.221" stop-color="#1e58ff"/><stop offset="0.299" stop-color="#484eff"/><stop offset="0.455" stop-color="#812fff"/><stop offset="0.519" stop-color="#9618ff"/><stop offset="0.532" stop-color="#9b10ff"/><stop offset="0.545" stop-color="#9f00ff"/><stop offset="0.844" stop-color="#ff00fd"/><stop offset="1" stop-color="#ff00ce"/></linearGradient><linearGradient id="g189" gradientUnits="userSpaceOnUse" x1="109.3" x2="335.3"><stop offset="0" stop-color="#006cff"/><stop offset="0.2" stop-color="#0058ff"/><stop offset="0.213" stop-color="#1656ff"/><stop offset="0.267" stop-color="#3850ff"/><stop offset="0.4" stop-color="#6d39ff"/><stop offset="0.507" stop-color="#8f19ff"/><stop offset="0.547" stop-color="#9c00ff"/><stop offset="0.867" stop-color="#ff00fc"/><stop offset="1" stop-color="#ff00d4"/></linearGradient><linearGradient id="g190" gradientUnits="userSpaceOnUse" x1="110.1" x2="330.6"><stop offset="0" stop-color="#0069ff"/><stop offset="0.192" stop-color="#0056ff"/><stop offset="0.233" stop-color="#2451ff"/><stop offset="0.315" stop-color="#4c46ff"/><stop offset="0.466" stop-color="#7f25ff"/><stop offset="0.521" stop-color="#900bff"/><stop offset="0.534" stop-color="#9500ff"/><stop offset="0.877" stop-color="#fe00ff"/><stop offset="1" stop-color="#ff00db"/></linearGradient><linearGradient id="g191" gradientUnits="userSpaceOnUse" x1="110.9" x2="325.9"><stop offset="0" stop-color="#0066ff"/><stop offset="0.197" stop-color="#0053ff"/><stop offset="0.225" stop-color="#1e4fff"/><stop offset="0.31" stop-color="#4843ff"/><stop offset="0.451" stop-color="#7826ff"/><stop offset="0.507" stop-color="#890eff"/><stop offset="0.521" stop-color="#8d00ff"/><stop offset="0.901" stop-color="#ff00ff"/><stop offset="1" stop-color="#ff00e2"/></linearGradient><linearGradient id="g192" gradientUnits="userSpaceOnUse" x1="111.7" x2="321.3"><stop offset="0" stop-color="#0064ff"/><stop offset="0.188" stop-color="#0051ff"/><stop offset="0.203" stop-color="#054fff"/><stop offset="0.217" stop-color="#174eff"/><stop offset="0.275" stop-color="#3846ff"/><stop offset="0.406" stop-color="#682eff"/><stop offset="0.478" stop-color="#7e18ff"/><stop offset="0.507" stop-color="#8605ff"/><stop offset="0.536" stop-color="#8f00ff"/><stop offset="0.928" stop-color="#ff00fe"/><stop offset="1" stop-color="#ff00e9"/></linearGradient><linearGradient id="g193" gradientUnits="userSpaceOnUse" x1="112.5" x2="316.6"><stop offset="0" stop-color="#0061ff"/><stop offset="0.191" stop-color="#004eff"/><stop offset="0.235" stop-color="#2348ff"/><stop offset="0.338" stop-color="#5039ff"/><stop offset="0.456" stop-color="#751cff"/><stop offset="0.485" stop-color="#7d0fff"/><stop offset="0.5" stop-color="#8100ff"/><stop offset="0.956" stop-color="#ff00fd"/><stop offset="1" stop-color="#ff00f0"/></linearGradient><linearGradient id="g194" gradientUnits="userSpaceOnUse" x1="113.3" x2="311.9"><stop offset="0" stop-color="#005eff"/><stop offset="0.197" stop-color="#004aff"/><stop offset="0.227" stop-color="#1d47ff"/><stop offset="0.303" stop-color="#413cff"/><stop offset="0.439" stop-color="#6d1eff"/><stop offset="0.5" stop-color="#7e00ff"/><stop offset="0.97" stop-color="#fe00ff"/><stop offset="1" stop-color="#ff00f7"/></linearGradient><linearGradient id="g195" gradientUnits="userSpaceOnUse" x1="114.1" x2="307.2"><stop offset="0" stop-color="#005bff"/><stop offset="0.203" stop-color="#0047ff"/><stop offset="0.219" stop-color="#1645ff"/><stop offset="0.281" stop-color="#373cff"/><stop offset="0.422" stop-color="#661fff"/><stop offset="0.469" stop-color="#730bff"/><stop offset="0.484" stop-color="#7700ff"/><stop offset="1" stop-color="#ff00ff"/></linearGradient><linearGradient id="g196" gradientUnits="userSpaceOnUse" x1="114.9" x2="302.5"><stop offset="0" stop-color="#0059ff"/><stop offset="0.194" stop-color="#0045ff"/><stop offset="0.242" stop-color="#243eff"/><stop offset="0.371" stop-color="#5528ff"/><stop offset="0.452" stop-color="#6c0eff"/><stop offset="0.468" stop-color="#7000ff"/><stop offset="1" stop-color="#f700ff"/></linearGradient><linearGradient id="g197" gradientUnits="userSpaceOnUse" x1="115.8" x2="297.9"><stop offset="0" stop-color="#0056ff"/><stop offset="0.2" stop-color="#0041ff"/><stop offset="0.217" stop-color="#133fff"/><stop offset="0.283" stop-color="#3535ff"/><stop offset="0.4" stop-color="#5b1cff"/><stop offset="0.433" stop-color="#6410ff"/><stop offset="0.467" stop-color="#6d00ff"/><stop offset="1" stop-color="#f000ff"/></linearGradient><linearGradient id="g198" gradientUnits="userSpaceOnUse" x1="116.7" x2="293.2"><stop offset="0" stop-color="#0053ff"/><stop offset="0.19" stop-color="#003fff"/><stop offset="0.207" stop-color="#073dff"/><stop offset="0.224" stop-color="#183aff"/><stop offset="0.31" stop-color="#3e2dff"/><stop offset="0.397" stop-color="#5819ff"/><stop offset="0.448" stop-color="#6600ff"/><stop offset="1" stop-color="#e800ff"/></linearGradient><linearGradient id="g199" gradientUnits="userSpaceOnUse" x1="117.5" x2="288.5"><stop offset="0" stop-color="#0050ff"/><stop offset="0.196" stop-color="#003bff"/><stop offset="0.232" stop-color="#1c36ff"/><stop offset="0.339" stop-color="#4623ff"/><stop offset="0.411" stop-color="#5a0dff"/><stop offset="0.429" stop-color="#5f00ff"/><stop offset="1" stop-color="#e100ff"/></linearGradient><linearGradient id="g200" gradientUnits="userSpaceOnUse" x1="118.4" x2="283.8"><stop offset="0" stop-color="#004cff"/><stop offset="0.2" stop-color="#0037ff"/><stop offset="0.236" stop-color="#1e32ff"/><stop offset="0.345" stop-color="#461dff"/><stop offset="0.4" stop-color="#550aff"/><stop offset="0.418" stop-color="#5a00ff"/><stop offset="1" stop-color="#da00ff"/></linearGradient><linearGradient id="g201" gradientUnits="userSpaceOnUse" x1="119.4" x2="279.1"><stop offset="0" stop-color="#0049ff"/><stop offset="0.189" stop-color="#0035ff"/><stop offset="0.208" stop-color="#0632ff"/><stop offset="0.226" stop-color="#172fff"/><stop offset="0.321" stop-color="#3d1eff"/><stop offset="0.377" stop-color="#4d0dff"/><stop offset="0.396" stop-color="#5200ff"/><stop offset="1" stop-color="#d300ff"/></linearGradient><linearGradient id="g202" gradientUnits="userSpaceOnUse" x1="120.3" x2="274.5"><stop offset="0" stop-color="#0046ff"/><stop offset="0.196" stop-color="#0030ff"/><stop offset="0.255" stop-color="#2527ff"/><stop offset="0.353" stop-color="#450fff"/><stop offset="0.373" stop-color="#4a03ff"/><stop offset="0.706" stop-color="#9300ff"/><stop offset="1" stop-color="#cc00ff"/></linearGradient><linearGradient id="g203" gradientUnits="userSpaceOnUse" x1="121.2" x2="269.8"><stop offset="0" stop-color="#0042ff"/><stop offset="0.204" stop-color="#002bff"/><stop offset="0.224" stop-color="#1528ff"/><stop offset="0.306" stop-color="#3617ff"/><stop offset="0.367" stop-color="#4700ff"/><stop offset="0.776" stop-color="#9c00ff"/><stop offset="1" stop-color="#c600ff"/></linearGradient><linearGradient id="g204" gradientUnits="userSpaceOnUse" x1="122.2" x2="265.1"><stop offset="0" stop-color="#003fff"/><stop offset="0.191" stop-color="#0028ff"/><stop offset="0.255" stop-color="#231dff"/><stop offset="0.319" stop-color="#380cff"/><stop offset="0.34" stop-color="#3e00ff"/><stop offset="0.66" stop-color="#8200ff"/><stop offset="1" stop-color="#bf00ff"/></linearGradient><linearGradient id="g205" gradientUnits="userSpaceOnUse" x1="123.2" x2="260.4"><stop offset="0" stop-color="#003bff"/><stop offset="0.2" stop-color="#0022ff"/><stop offset="0.244" stop-color="#1e1aff"/><stop offset="0.289" stop-color="#2e0eff"/><stop offset="0.311" stop-color="#3400ff"/><stop offset="0.511" stop-color="#6200ff"/><stop offset="1" stop-color="#b900ff"/></linearGradient><linearGradient id="g206" gradientUnits="userSpaceOnUse" x1="124.2" x2="255.7"><stop offset="0" stop-color="#0037ff"/><stop offset="0.186" stop-color="#001fff"/><stop offset="0.209" stop-color="#081bff"/><stop offset="0.233" stop-color="#1816ff"/><stop offset="0.302" stop-color="#3100ff"/><stop offset="0.535" stop-color="#6400ff"/><stop offset="1" stop-color="#b300ff"/></linearGradient><linearGradient id="g207" gradientUnits="userSpaceOnUse" x1="125.2" x2="251.0"><stop offset="0" stop-color="#0032ff"/><stop offset="0.195" stop-color="#0018ff"/><stop offset="0.244" stop-color="#1c0aff"/><stop offset="0.268" stop-color="#2500ff"/><stop offset="0.463" stop-color="#5400ff"/><stop offset="1" stop-color="#ac00ff"/></linearGradient><linearGradient id="g208" gradientUnits="userSpaceOnUse" x1="126.3" x2="246.4"><stop offset="0" stop-color="#002eff"/><stop offset="0.175" stop-color="#0015ff"/><stop offset="0.2" stop-color="#000fff"/><stop offset="0.225" stop-color="#1304ff"/><stop offset="0.325" stop-color="#3400ff"/><stop offset="0.6" stop-color="#6900ff"/><stop offset="1" stop-color="#a600ff"/></linearGradient><linearGradient id="g209" gradientUnits="userSpaceOnUse" x1="127.4" x2="241.7"><stop offset="0" stop-color="#0029ff"/><stop offset="0.158" stop-color="#0010ff"/><stop offset="0.184" stop-color="#0008ff"/><stop offset="0.211" stop-color="#0b00ff"/><stop offset="0.263" stop-color="#2200ff"/><stop offset="0.447" stop-color="#4c00ff"/><stop offset="0.947" stop-color="#9900ff"/><stop offset="1" stop-color="#a000ff"/></linearGradient><linearGradient id="g210" gradientUnits="userSpaceOnUse" x1="128.6" x2="237.0"><stop offset="0" stop-color="#0023ff"/><stop offset="0.139" stop-color="#000bff"/><stop offset="0.167" stop-color="#0000ff"/><stop offset="0.194" stop-color="#0000ff"/><stop offset="0.222" stop-color="#1200ff"/><stop offset="0.306" stop-color="#2d00ff"/><stop offset="0.583" stop-color="#6000ff"/><stop offset="1" stop-color="#9a00ff"/></linearGradient><linearGradient id="g211" gradientUnits="userSpaceOnUse" x1="129.8" x2="232.3"><stop offset="0" stop-color="#001dff"/><stop offset="0.0882" stop-color="#000dff"/><stop offset="0.118" stop-color="#0000ff"/><stop offset="0.176" stop-color="#0000ff"/><stop offset="0.206" stop-color="#0900ff"/><stop offset="0.235" stop-color="#1800ff"/><stop offset="0.382" stop-color="#3c00ff"/><stop offset="0.824" stop-color="#7e00ff"/><stop offset="1" stop-color="#9400ff"/></linearGradient><linearGradient id="g212" gradientUnits="userSpaceOnUse" x1="131.0" x2="227.6"><stop offset="0" stop-color="#0015ff"/><stop offset="0.0937" stop-color="#0000ff"/><stop offset="0.187" stop-color="#0000ff"/><stop offset="0.219" stop-color="#1200ff"/><stop offset="0.344" stop-color="#3300ff"/><stop offset="0.719" stop-color="#6c00ff"/><stop offset="1" stop-color="#8e00ff"/></linearGradient><linearGradient id="g213" gradientUnits="userSpaceOnUse" x1="132.3" x2="223.0"><stop offset="0" stop-color="#0008ff"/><stop offset="0.0333" stop-color="#0000ff"/><stop offset="0.167" stop-color="#0000ff"/><stop offset="0.3" stop-color="#2900ff"/><stop offset="0.567" stop-color="#5400ff"/><stop offset="1" stop-color="#8800ff"/></linearGradient><linearGradient id="g214" gradientUnits="userSpaceOnUse" x1="133.6" x2="218.3"><stop offset="0" stop-color="#0000ff"/><stop offset="0.179" stop-color="#0000ff"/><stop offset="0.214" stop-color="#1200ff"/><stop offset="0.357" stop-color="#3300ff"/><stop offset="0.786" stop-color="#6b00ff"/><stop offset="1" stop-color="#8200ff"/></linearGradient><linearGradient id="g215" gradientUnits="userSpaceOnUse" x1="135.1" x2="213.6"><stop offset="0" stop-color="#0000ff"/><stop offset="0.154" stop-color="#0000ff"/><stop offset="0.269" stop-color="#2100ff"/><stop offset="0.5" stop-color="#4600ff"/><stop offset="1" stop-color="#7c00ff"/></linearGradient><linearGradient id="g216" gradientUnits="userSpaceOnUse" x1="136.6" x2="208.9"><stop offset="0" stop-color="#0000ff"/><stop offset="0.167" stop-color="#0000ff"/><stop offset="0.208" stop-color="#1300ff"/><stop offset="0.417" stop-color="#3900ff"/><stop offset="1" stop-color="#7600ff"/></linearGradient><linearGradient id="g217" gradientUnits="userSpaceOnUse" x1="138.1" x2="204.2"><stop offset="0" stop-color="#0000ff"/><stop offset="0.136" stop-color="#0000ff"/><stop offset="0.273" stop-color="#2200ff"/><stop offset="0.591" stop-color="#4a00ff"/><stop offset="1" stop-color="#7000ff"/></linearGradient><linearGradient id="g218" gradientUnits="userSpaceOnUse" x1="139.9" x2="199.6"><stop offset="0" stop-color="#0000ff"/><stop offset="0.105" stop-color="#0000ff"/><stop offset="0.158" stop-color="#0800ff"/><stop offset="0.263" stop-color="#2100ff"/><stop offset="0.632" stop-color="#4b00ff"/><stop offset="1" stop-color="#6a00ff"/></linearGradient><linearGradient id="g219" gradientUnits="userSpaceOnUse" x1="141.9" x2="194.9"><stop offset="0" stop-color="#0000ff"/><stop offset="0.118" stop-color="#0000ff"/><stop offset="0.176" stop-color="#1300ff"/><stop offset="0.412" stop-color="#3400ff"/><stop offset="1" stop-color="#6400ff"/></linearGradient><linearGradient id="g220" gradientUnits="userSpaceOnUse" x1="143.9" x2="190.2"><stop offset="0" stop-color="#0000ff"/><stop offset="0.0667" stop-color="#0000ff"/><stop offset="0.2" stop-color="#1b00ff"/><stop offset="0.6" stop-color="#4200ff"/><stop offset="1" stop-color="#5d00ff"/></linearGradient><linearGradient id="g221" gradientUnits="userSpaceOnUse" x1="146.2" x2="185.5"><stop offset="0" stop-color="#0000ff"/><stop offset="0.231" stop-color="#2100ff"/><stop offset="0.769" stop-color="#4a00ff"/><stop offset="1" stop-color="#5700ff"/></linearGradient><linearGradient id="g222" gradientUnits="userSpaceOnUse" x1="148.6" x2="180.8"><stop offset="0" stop-color="#0900ff"/><stop offset="0.2" stop-color="#2100ff"/><stop offset="0.9" stop-color="#4c00ff"/><stop offset="1" stop-color="#5000ff"/></linearGradient><linearGradient id="g223" gradientUnits="userSpaceOnUse" x1="151.1" x2="176.2"><stop offset="0" stop-color="#1600ff"/><stop offset="0.625" stop-color="#3a00ff"/><stop offset="1" stop-color="#4900ff"/></linearGradient><linearGradient id="g224" gradientUnits="userSpaceOnUse" x1="153.6" x2="171.5"><stop offset="0" stop-color="#1e00ff"/><stop offset="1" stop-color="#4200ff"/></linearGradient><linearGradient id="g225" gradientUnits="userSpaceOnUse" x1="156.0" x2="166.8"><stop offset="0" stop-color="#2500ff"/><stop offset="1" stop-color="#3b00ff"/></linearGradient></defs><rect x="58" y="75" width="442" height="459" fill="#666"/><g clip-path="url(#hc)"><rect x="98.9" y="79" width="15.4" height="2.5" fill="url(#g0)"/><rect x="90.5" y="81" width="33.3" height="2.5" fill="url(#g1)"/><rect x="86.1" y="83" width="44.2" height="2.5" fill="url(#g2)"/><rect x="83.1" y="85" width="52.2" height="2.5" fill="url(#g3)"/><rect x="81.1" y="87" width="58.6" height="2.5" fill="url(#g4)"/><rect x="79.1" y="89" width="64.5" height="2.5" fill="url(#g5)"/><rect x="77.8" y="91" width="69.7" height="2.5" fill="url(#g6)"/><rect x="76.5" y="93" width="74.8" height="2.5" fill="url(#g7)"/><rect x="75.3" y="95" width="79.7" height="2.5" fill="url(#g8)"/><rect x="74.3" y="97" width="84.3" height="2.5" fill="url(#g9)"/><rect x="73.3" y="99" width="88.8" height="2.5" fill="url(#g10)"/><rect x="72.3" y="101" width="93.1" height="2.5" fill="url(#g11)"/><rect x="71.5" y="103" width="97.2" height="2.5" fill="url(#g12)"/><rect x="70.7" y="105" width="101.2" height="2.5" fill="url(#g13)"/><rect x="70.0" y="107" width="105.1" height="2.5" fill="url(#g14)"/><rect x="69.3" y="109" width="108.9" height="2.5" fill="url(#g15)"/><rect x="68.7" y="111" width="112.5" height="2.5" fill="url(#g16)"/><rect x="68.0" y="113" width="116.1" height="2.5" fill="url(#g17)"/><rect x="67.4" y="115" width="119.7" height="2.5" fill="url(#g18)"/><rect x="66.9" y="117" width="123.0" height="2.5" fill="url(#g19)"/><rect x="66.3" y="119" width="126.4" height="2.5" fill="url(#g20)"/><rect x="65.8" y="121" width="129.7" height="2.5" fill="url(#g21)"/><rect x="65.3" y="123" width="132.9" height="2.5" fill="url(#g22)"/><rect x="64.9" y="125" width="136.0" height="2.5" fill="url(#g23)"/><rect x="64.5" y="127" width="139.1" height="2.5" fill="url(#g24)"/><rect x="64.1" y="129" width="142.1" height="2.5" fill="url(#g25)"/><rect x="63.7" y="131" width="145.2" height="2.5" fill="url(#g26)"/><rect x="63.3" y="133" width="148.1" height="2.5" fill="url(#g27)"/><rect x="63.0" y="135" width="151.0" height="2.5" fill="url(#g28)"/><rect x="62.7" y="137" width="153.8" height="2.5" fill="url(#g29)"/><rect x="62.4" y="139" width="156.6" height="2.5" fill="url(#g30)"/><rect x="62.1" y="141" width="159.4" height="2.5" fill="url(#g31)"/><rect x="61.8" y="143" width="162.2" height="2.5" fill="url(#g32)"/><rect x="61.6" y="145" width="164.8" height="2.5" fill="url(#g33)"/><rect x="61.3" y="147" width="167.5" height="2.5" fill="url(#g34)"/><rect x="61.1" y="149" width="170.1" height="2.5" fill="url(#g35)"/><rect x="60.9" y="151" width="172.8" height="2.5" fill="url(#g36)"/><rect x="60.7" y="153" width="175.4" height="2.5" fill="url(#g37)"/><rect x="60.5" y="155" width="177.9" height="2.5" fill="url(#g38)"/><rect x="60.4" y="157" width="180.4" height="2.5" fill="url(#g39)"/><rect x="60.2" y="159" width="182.9" height="2.5" fill="url(#g40)"/><rect x="60.0" y="161" width="185.4" height="2.5" fill="url(#g41)"/><rect x="59.9" y="163" width="187.9" height="2.5" fill="url(#g42)"/><rect x="59.8" y="165" width="190.3" height="2.5" fill="url(#g43)"/><rect x="59.7" y="167" width="192.7" height="2.5" fill="url(#g44)"/><rect x="59.6" y="169" width="195.1" height="2.5" fill="url(#g45)"/><rect x="59.5" y="171" width="197.5" height="2.5" fill="url(#g46)"/><rect x="59.4" y="173" width="199.9" height="2.5" fill="url(#g47)"/><rect x="59.3" y="175" width="202.3" height="2.5" fill="url(#g48)"/><rect x="59.3" y="177" width="204.6" height="2.5" fill="url(#g49)"/><rect x="59.3" y="179" width="206.9" height="2.5" fill="url(#g50)"/><rect x="59.2" y="181" width="209.2" height="2.5" fill="url(#g51)"/><rect x="59.2" y="183" width="211.5" height="2.5" fill="url(#g52)"/><rect x="59.2" y="185" width="213.7" height="2.5" fill="url(#g53)"/><rect x="59.2" y="187" width="216.0" height="2.5" fill="url(#g54)"/><rect x="59.2" y="189" width="218.3" height="2.5" fill="url(#g55)"/><rect x="59.2" y="191" width="220.5" height="2.5" fill="url(#g56)"/><rect x="59.2" y="193" width="222.7" height="2.5" fill="url(#g57)"/><rect x="59.3" y="195" width="224.9" height="2.5" fill="url(#g58)"/><rect x="59.3" y="197" width="227.0" height="2.5" fill="url(#g59)"/><rect x="59.4" y="199" width="229.2" height="2.5" fill="url(#g60)"/><rect x="59.4" y="201" width="231.4" height="2.5" fill="url(#g61)"/><rect x="59.5" y="203" width="233.5" height="2.5" fill="url(#g62)"/><rect x="59.6" y="205" width="235.7" height="2.5" fill="url(#g63)"/><rect x="59.6" y="207" width="237.8" height="2.5" fill="url(#g64)"/><rect x="59.7" y="209" width="239.9" height="2.5" fill="url(#g65)"/><rect x="59.8" y="211" width="242.0" height="2.5" fill="url(#g66)"/><rect x="59.9" y="213" width="244.2" height="2.5" fill="url(#g67)"/><rect x="60.0" y="215" width="246.3" height="2.5" fill="url(#g68)"/><rect x="60.1" y="217" width="248.3" height="2.5" fill="url(#g69)"/><rect x="60.3" y="219" width="250.4" height="2.5" fill="url(#g70)"/><rect x="60.4" y="221" width="252.5" height="2.5" fill="url(#g71)"/><rect x="60.5" y="223" width="254.6" height="2.5" fill="url(#g72)"/><rect x="60.6" y="225" width="256.7" height="2.5" fill="url(#g73)"/><rect x="60.8" y="227" width="258.7" height="2.5" fill="url(#g74)"/><rect x="60.9" y="229" width="260.8" height="2.5" fill="url(#g75)"/><rect x="61.1" y="231" width="262.8" height="2.5" fill="url(#g76)"/><rect x="61.2" y="233" width="264.8" height="2.5" fill="url(#g77)"/><rect x="61.4" y="235" width="266.9" height="2.5" fill="url(#g78)"/><rect x="61.6" y="237" width="268.9" height="2.5" fill="url(#g79)"/><rect x="61.7" y="239" width="270.9" height="2.5" fill="url(#g80)"/><rect x="61.9" y="241" width="272.9" height="2.5" fill="url(#g81)"/><rect x="62.1" y="243" width="274.9" height="2.5" fill="url(#g82)"/><rect x="62.3" y="245" width="276.9" height="2.5" fill="url(#g83)"/><rect x="62.5" y="247" width="278.9" height="2.5" fill="url(#g84)"/><rect x="62.7" y="249" width="280.9" height="2.5" fill="url(#g85)"/><rect x="62.9" y="251" width="282.8" height="2.5" fill="url(#g86)"/><rect x="63.1" y="253" width="284.8" height="2.5" fill="url(#g87)"/><rect x="63.3" y="255" width="286.8" height="2.5" fill="url(#g88)"/><rect x="63.5" y="257" width="288.7" height="2.5" fill="url(#g89)"/><rect x="63.8" y="259" width="290.7" height="2.5" fill="url(#g90)"/><rect x="64.0" y="261" width="292.6" height="2.5" fill="url(#g91)"/><rect x="64.2" y="263" width="294.6" height="2.5" fill="url(#g92)"/><rect x="64.5" y="265" width="296.5" height="2.5" fill="url(#g93)"/><rect x="64.7" y="267" width="298.4" height="2.5" fill="url(#g94)"/><rect x="65.0" y="269" width="300.4" height="2.5" fill="url(#g95)"/><rect x="65.2" y="271" width="302.3" height="2.5" fill="url(#g96)"/><rect x="65.5" y="273" width="304.2" height="2.5" fill="url(#g97)"/><rect x="65.8" y="275" width="306.1" height="2.5" fill="url(#g98)"/><rect x="66.1" y="277" width="308.0" height="2.5" fill="url(#g99)"/><rect x="66.3" y="279" width="309.9" height="2.5" fill="url(#g100)"/><rect x="66.6" y="281" width="311.8" height="2.5" fill="url(#g101)"/><rect x="66.9" y="283" width="313.7" height="2.5" fill="url(#g102)"/><rect x="67.2" y="285" width="315.6" height="2.5" fill="url(#g103)"/><rect x="67.5" y="287" width="317.5" height="2.5" fill="url(#g104)"/><rect x="67.8" y="289" width="319.4" height="2.5" fill="url(#g105)"/><rect x="68.1" y="291" width="321.3" height="2.5" fill="url(#g106)"/><rect x="68.4" y="293" width="323.2" height="2.5" fill="url(#g107)"/><rect x="68.7" y="295" width="325.1" height="2.5" fill="url(#g108)"/><rect x="69.0" y="297" width="326.9" height="2.5" fill="url(#g109)"/><rect x="69.3" y="299" width="328.8" height="2.5" fill="url(#g110)"/><rect x="69.6" y="301" width="330.7" height="2.5" fill="url(#g111)"/><rect x="69.9" y="303" width="332.5" height="2.5" fill="url(#g112)"/><rect x="70.3" y="305" width="334.4" height="2.5" fill="url(#g113)"/><rect x="70.6" y="307" width="336.2" height="2.5" fill="url(#g114)"/><rect x="70.9" y="309" width="338.1" height="2.5" fill="url(#g115)"/><rect x="71.3" y="311" width="339.9" height="2.5" fill="url(#g116)"/><rect x="71.6" y="313" width="341.7" height="2.5" fill="url(#g117)"/><rect x="72.0" y="315" width="343.5" height="2.5" fill="url(#g118)"/><rect x="72.3" y="317" width="345.4" height="2.5" fill="url(#g119)"/><rect x="72.7" y="319" width="347.2" height="2.5" fill="url(#g120)"/><rect x="73.0" y="321" width="349.0" height="2.5" fill="url(#g121)"/><rect x="73.4" y="323" width="350.9" height="2.5" fill="url(#g122)"/><rect x="73.7" y="325" width="352.7" height="2.5" fill="url(#g123)"/><rect x="74.1" y="327" width="354.5" height="2.5" fill="url(#g124)"/><rect x="74.5" y="329" width="356.3" height="2.5" fill="url(#g125)"/><rect x="74.9" y="331" width="358.1" height="2.5" fill="url(#g126)"/><rect x="75.3" y="333" width="359.9" height="2.5" fill="url(#g127)"/><rect x="75.7" y="335" width="361.7" height="2.5" fill="url(#g128)"/><rect x="76.1" y="337" width="363.4" height="2.5" fill="url(#g129)"/><rect x="76.5" y="339" width="365.2" height="2.5" fill="url(#g130)"/><rect x="76.9" y="341" width="367.0" height="2.5" fill="url(#g131)"/><rect x="77.3" y="343" width="368.8" height="2.5" fill="url(#g132)"/><rect x="77.7" y="345" width="370.6" height="2.5" fill="url(#g133)"/><rect x="78.1" y="347" width="372.4" height="2.5" fill="url(#g134)"/><rect x="78.5" y="349" width="374.1" height="2.5" fill="url(#g135)"/><rect x="79.0" y="351" width="375.9" height="2.5" fill="url(#g136)"/><rect x="79.4" y="353" width="377.6" height="2.5" fill="url(#g137)"/><rect x="79.8" y="355" width="379.4" height="2.5" fill="url(#g138)"/><rect x="80.3" y="357" width="381.1" height="2.5" fill="url(#g139)"/><rect x="80.7" y="359" width="382.9" height="2.5" fill="url(#g140)"/><rect x="81.1" y="361" width="384.6" height="2.5" fill="url(#g141)"/><rect x="81.6" y="363" width="386.3" height="2.5" fill="url(#g142)"/><rect x="82.0" y="365" width="388.0" height="2.5" fill="url(#g143)"/><rect x="82.5" y="367" width="389.8" height="2.5" fill="url(#g144)"/><rect x="82.9" y="369" width="391.5" height="2.5" fill="url(#g145)"/><rect x="83.4" y="371" width="393.3" height="2.5" fill="url(#g146)"/><rect x="83.8" y="373" width="395.0" height="2.5" fill="url(#g147)"/><rect x="84.3" y="375" width="396.7" height="2.5" fill="url(#g148)"/><rect x="84.8" y="377" width="398.4" height="2.5" fill="url(#g149)"/><rect x="85.3" y="379" width="400.1" height="2.5" fill="url(#g150)"/><rect x="85.8" y="381" width="401.8" height="2.5" fill="url(#g151)"/><rect x="86.2" y="383" width="403.5" height="2.5" fill="url(#g152)"/><rect x="86.7" y="385" width="405.2" height="2.5" fill="url(#g153)"/><rect x="87.2" y="387" width="406.8" height="2.5" fill="url(#g154)"/><rect x="87.8" y="389" width="406.4" height="2.5" fill="url(#g155)"/><rect x="88.3" y="391" width="401.5" height="2.5" fill="url(#g156)"/><rect x="88.8" y="393" width="396.3" height="2.5" fill="url(#g157)"/><rect x="89.3" y="395" width="391.1" height="2.5" fill="url(#g158)"/><rect x="89.8" y="397" width="385.9" height="2.5" fill="url(#g159)"/><rect x="90.4" y="399" width="380.7" height="2.5" fill="url(#g160)"/><rect x="90.9" y="401" width="375.4" height="2.5" fill="url(#g161)"/><rect x="91.4" y="403" width="370.2" height="2.5" fill="url(#g162)"/><rect x="92.0" y="405" width="365.0" height="2.5" fill="url(#g163)"/><rect x="92.6" y="407" width="359.7" height="2.5" fill="url(#g164)"/><rect x="93.1" y="409" width="354.5" height="2.5" fill="url(#g165)"/><rect x="93.7" y="411" width="349.2" height="2.5" fill="url(#g166)"/><rect x="94.3" y="413" width="344.0" height="2.5" fill="url(#g167)"/><rect x="94.8" y="415" width="338.7" height="2.5" fill="url(#g168)"/><rect x="95.4" y="417" width="333.5" height="2.5" fill="url(#g169)"/><rect x="96.0" y="419" width="328.2" height="2.5" fill="url(#g170)"/><rect x="96.6" y="421" width="322.9" height="2.5" fill="url(#g171)"/><rect x="97.2" y="423" width="317.6" height="2.5" fill="url(#g172)"/><rect x="97.8" y="425" width="312.3" height="2.5" fill="url(#g173)"/><rect x="98.5" y="427" width="307.0" height="2.5" fill="url(#g174)"/><rect x="99.1" y="429" width="301.7" height="2.5" fill="url(#g175)"/><rect x="99.8" y="431" width="296.4" height="2.5" fill="url(#g176)"/><rect x="100.4" y="433" width="291.0" height="2.5" fill="url(#g177)"/><rect x="101.1" y="435" width="285.6" height="2.5" fill="url(#g178)"/><rect x="101.8" y="437" width="280.3" height="2.5" fill="url(#g179)"/><rect x="102.5" y="439" width="274.9" height="2.5" fill="url(#g180)"/><rect x="103.2" y="441" width="269.5" height="2.5" fill="url(#g181)"/><rect x="104.0" y="443" width="264.1" height="2.5" fill="url(#g182)"/><rect x="104.7" y="445" width="258.7" height="2.5" fill="url(#g183)"/><rect x="105.5" y="447" width="253.2" height="2.5" fill="url(#g184)"/><rect x="106.2" y="449" width="247.8" height="2.5" fill="url(#g185)"/><rect x="107.0" y="451" width="242.4" height="2.5" fill="url(#g186)"/><rect x="107.8" y="453" width="236.9" height="2.5" fill="url(#g187)"/><rect x="108.5" y="455" width="231.4" height="2.5" fill="url(#g188)"/><rect x="109.3" y="457" width="226.0" height="2.5" fill="url(#g189)"/><rect x="110.1" y="459" width="220.5" height="2.5" fill="url(#g190)"/><rect x="110.9" y="461" width="215.1" height="2.5" fill="url(#g191)"/><rect x="111.7" y="463" width="209.6" height="2.5" fill="url(#g192)"/><rect x="112.5" y="465" width="204.1" height="2.5" fill="url(#g193)"/><rect x="113.3" y="467" width="198.6" height="2.5" fill="url(#g194)"/><rect x="114.1" y="469" width="193.1" height="2.5" fill="url(#g195)"/><rect x="114.9" y="471" width="187.6" height="2.5" fill="url(#g196)"/><rect x="115.8" y="473" width="182.1" height="2.5" fill="url(#g197)"/><rect x="116.7" y="475" width="176.5" height="2.5" fill="url(#g198)"/><rect x="117.5" y="477" width="170.9" height="2.5" fill="url(#g199)"/><rect x="118.4" y="479" width="165.4" height="2.5" fill="url(#g200)"/><rect x="119.4" y="481" width="159.8" height="2.5" fill="url(#g201)"/><rect x="120.3" y="483" width="154.2" height="2.5" fill="url(#g202)"/><rect x="121.2" y="485" width="148.6" height="2.5" fill="url(#g203)"/><rect x="122.2" y="487" width="142.9" height="2.5" fill="url(#g204)"/><rect x="123.2" y="489" width="137.2" height="2.5" fill="url(#g205)"/><rect x="124.2" y="491" width="131.6" height="2.5" fill="url(#g206)"/><rect x="125.2" y="493" width="125.8" height="2.5" fill="url(#g207)"/><rect x="126.3" y="495" width="120.1" height="2.5" fill="url(#g208)"/><rect x="127.4" y="497" width="114.3" height="2.5" fill="url(#g209)"/><rect x="128.6" y="499" width="108.4" height="2.5" fill="url(#g210)"/><rect x="129.8" y="501" width="102.6" height="2.5" fill="url(#g211)"/><rect x="131.0" y="503" width="96.7" height="2.5" fill="url(#g212)"/><rect x="132.3" y="505" width="90.7" height="2.5" fill="url(#g213)"/><rect x="133.6" y="507" width="84.7" height="2.5" fill="url(#g214)"/><rect x="135.1" y="509" width="78.6" height="2.5" fill="url(#g215)"/><rect x="136.6" y="511" width="72.4" height="2.5" fill="url(#g216)"/><rect x="138.1" y="513" width="66.1" height="2.5" fill="url(#g217)"/><rect x="139.9" y="515" width="59.6" height="2.5" fill="url(#g218)"/><rect x="141.9" y="517" width="53.0" height="2.5" fill="url(#g219)"/><rect x="143.9" y="519" width="46.3" height="2.5" fill="url(#g220)"/><rect x="146.2" y="521" width="39.3" height="2.5" fill="url(#g221)"/><rect x="148.6" y="523" width="32.2" height="2.5" fill="url(#g222)"/><rect x="151.1" y="525" width="25.1" height="2.5" fill="url(#g223)"/><rect x="153.6" y="527" width="17.9" height="2.5" fill="url(#g224)"/><rect x="156.0" y="529" width="10.8" height="2.5" fill="url(#g225)"/></g><path d="M161.4 530.7 L161.4 530.7 L161.4 530.7 L161.4 530.7 L161.4 530.7 L161.3 530.7 L161.3 530.7 L161.3 530.7 L161.3 530.7 L161.2 530.7 L161.2 530.7 L161.2 530.7 L161.2 530.7 L161.1 530.7 L161.1 530.7 L161.1 530.7 L161.1 530.7 L161.0 530.8 L161.0 530.8 L161.0 530.8 L160.9 530.8 L160.9 530.8 L160.9 530.8 L160.8 530.8 L160.8 530.8 L160.7 530.8 L160.7 530.8 L160.7 530.8 L160.6 530.8 L160.6 530.8 L160.5 530.8 L160.5 530.8 L160.4 530.8 L160.3 530.8 L160.3 530.8 L160.2 530.8 L160.1 530.8 L160.1 530.7 L160.0 530.7 L159.9 530.7 L159.8 530.6 L159.7 530.6 L159.6 530.5 L159.4 530.4 L159.3 530.3 L159.1 530.2 L159.0 530.1 L158.8 530.0 L158.7 529.9 L158.5 529.8 L158.3 529.6 L158.1 529.5 L157.9 529.3 L157.6 529.1 L157.4 528.9 L157.1 528.7 L156.9 528.5 L156.6 528.3 L156.3 528.0 L156.0 527.7 L155.7 527.5 L155.3 527.2 L154.9 526.9 L154.6 526.6 L154.2 526.2 L153.7 525.9 L153.2 525.5 L152.7 525.1 L152.2 524.7 L151.6 524.2 L151.1 523.8 L150.4 523.3 L149.8 522.8 L149.2 522.2 L148.5 521.7 L147.7 521.1 L147.0 520.4 L146.2 519.7 L145.4 518.9 L144.5 518.1 L143.6 517.2 L142.7 516.3 L141.7 515.4 L140.8 514.3 L139.7 513.1 L138.6 511.7 L137.4 510.1 L136.1 508.4 L134.8 506.5 L133.3 504.4 L131.8 502.0 L130.3 499.3 L128.7 496.5 L127.0 493.5 L125.2 490.0 L123.3 486.2 L121.3 482.0 L119.2 477.4 L117.1 472.5 L114.8 467.1 L112.5 461.2 L110.0 454.8 L107.3 448.0 L104.6 440.6 L101.8 432.7 L99.1 424.2 L96.4 415.1 L93.6 405.4 L90.8 395.1 L88.0 384.3 L85.3 372.9 L82.6 361.0 L79.9 348.5 L77.2 335.5 L74.7 322.2 L72.4 308.9 L70.2 295.5 L68.2 281.7 L66.3 267.8 L64.7 254.0 L63.3 240.6 L62.3 227.4 L61.5 214.3 L60.9 201.5 L60.7 189.1 L60.8 177.3 L61.3 165.9 L62.2 154.8 L63.4 144.3 L64.9 134.4 L66.7 125.4 L68.9 117.0 L71.4 109.2 L74.2 102.1 L77.3 96.0 L80.7 90.9 L84.4 87.1 L88.4 84.5 L92.7 82.7 L97.1 81.6 L101.6 80.8 L106.3 80.4 L111.2 80.7 L116.1 81.5 L121.1 82.7 L126.0 84.0 L130.8 85.7 L135.7 87.8 L140.5 90.1 L145.2 92.6 L149.9 95.1 L154.5 97.5 L159.1 100.1 L163.6 102.8 L168.1 105.5 L172.5 108.3 L176.9 111.1 L181.3 114.0 L185.6 117.0 L189.9 120.0 L194.2 123.1 L198.5 126.3 L202.8 129.5 L207.1 132.8 L211.3 136.1 L215.6 139.5 L219.8 142.9 L224.1 146.3 L228.3 149.8 L232.5 153.3 L236.7 156.9 L241.0 160.4 L245.2 164.0 L249.4 167.7 L253.6 171.3 L257.8 175.0 L262.1 178.7 L266.3 182.5 L270.5 186.2 L274.8 190.0 L279.0 193.7 L283.2 197.5 L287.4 201.3 L291.6 205.1 L295.8 208.9 L300.0 212.7 L304.2 216.5 L308.4 220.3 L312.6 224.1 L316.8 227.9 L321.0 231.7 L325.1 235.5 L329.2 239.2 L333.3 243.0 L337.4 246.7 L341.5 250.5 L345.5 254.2 L349.5 257.8 L353.5 261.5 L357.5 265.1 L361.4 268.7 L365.3 272.3 L369.1 275.9 L373.0 279.4 L376.7 282.8 L380.5 286.3 L384.2 289.6 L387.8 293.0 L391.4 296.3 L395.0 299.5 L398.4 302.7 L401.9 305.8 L405.2 308.9 L408.5 311.9 L411.7 314.9 L414.8 317.7 L417.8 320.5 L420.7 323.2 L423.6 325.8 L426.4 328.3 L429.1 330.8 L431.7 333.2 L434.3 335.6 L436.8 337.9 L439.2 340.1 L441.6 342.3 L443.8 344.3 L446.0 346.3 L448.1 348.2 L450.1 350.0 L452.0 351.7 L453.8 353.4 L455.6 355.0 L457.3 356.6 L458.9 358.1 L460.4 359.5 L461.9 360.9 L463.3 362.2 L464.7 363.4 L465.9 364.6 L467.2 365.7 L468.4 366.8 L469.5 367.8 L470.5 368.8 L471.6 369.7 L472.6 370.6 L473.5 371.5 L474.4 372.3 L475.2 373.1 L476.1 373.8 L476.9 374.6 L477.6 375.3 L478.4 376.0 L479.1 376.6 L479.8 377.3 L480.5 377.9 L481.1 378.5 L481.7 379.1 L482.3 379.6 L482.9 380.1 L483.4 380.6 L483.9 381.1 L484.4 381.5 L484.9 382.0 L485.4 382.4 L485.8 382.7 L486.2 383.1 L486.6 383.4 L486.9 383.8 L487.2 384.1 L487.6 384.4 L487.9 384.7 L488.2 384.9 L488.4 385.2 L488.7 385.4 L488.9 385.6 L489.1 385.8 L489.3 386.0 L489.5 386.2 L489.7 386.4 L489.9 386.5 L490.2 386.8 L490.4 387.0 L490.7 387.2 L490.9 387.4 L491.1 387.6 L491.3 387.8 L491.5 388.0 L491.6 388.1 L491.8 388.3 L491.9 388.4 L492.1 388.5 L492.2 388.6 L492.3 388.8 L492.4 388.9 L492.5 388.9 L492.6 389.0 L492.6 389.0 L492.7 389.1 L492.7 389.1 L492.7 389.1 Z" fill="none" stroke="#3a3a3a" stroke-width="2.2" stroke-linejoin="round"/><path d="M114.0 479.5h7M117.5 476.0v7M173.0 98.5h7M176.5 95.0v7M232.0 152.5h7M235.5 149.0v7M291.0 207.5h7M294.5 204.0v7M351.0 261.5h7M354.5 258.0v7" stroke="#848484" stroke-width="1" fill="none"/><path d="M114.0 479.5h7M117.5 476.0v7M114.0 424.5h7M117.5 421.0v7M114.0 370.5h7M117.5 367.0v7M114.0 315.5h7M117.5 312.0v7M114.0 261.5h7M117.5 258.0v7M114.0 207.5h7M117.5 204.0v7M114.0 152.5h7M117.5 149.0v7M114.0 98.5h7M117.5 95.0v7M173.0 479.5h7M176.5 476.0v7M173.0 424.5h7M176.5 421.0v7M173.0 370.5h7M176.5 367.0v7M173.0 315.5h7M176.5 312.0v7M173.0 261.5h7M176.5 258.0v7M173.0 207.5h7M176.5 204.0v7M173.0 152.5h7M176.5 149.0v7M173.0 98.5h7M176.5 95.0v7M232.0 479.5h7M235.5 476.0v7M232.0 424.5h7M235.5 421.0v7M232.0 370.5h7M235.5 367.0v7M232.0 315.5h7M235.5 312.0v7M232.0 261.5h7M235.5 258.0v7M232.0 207.5h7M235.5 204.0v7M232.0 152.5h7M235.5 149.0v7M232.0 98.5h7M235.5 95.0v7M291.0 479.5h7M294.5 476.0v7M291.0 424.5h7M294.5 421.0v7M291.0 370.5h7M294.5 367.0v7M291.0 315.5h7M294.5 312.0v7M291.0 261.5h7M294.5 258.0v7M291.0 207.5h7M294.5 204.0v7M291.0 152.5h7M294.5 149.0v7M291.0 98.5h7M294.5 95.0v7M351.0 479.5h7M354.5 476.0v7M351.0 424.5h7M354.5 421.0v7M351.0 370.5h7M354.5 367.0v7M351.0 315.5h7M354.5 312.0v7M351.0 261.5h7M354.5 258.0v7M351.0 207.5h7M354.5 204.0v7M351.0 152.5h7M354.5 149.0v7M351.0 98.5h7M354.5 95.0v7M410.0 479.5h7M413.5 476.0v7M410.0 424.5h7M413.5 421.0v7M410.0 370.5h7M413.5 367.0v7M410.0 261.5h7M413.5 258.0v7M410.0 207.5h7M413.5 204.0v7M410.0 152.5h7M413.5 149.0v7M410.0 98.5h7M413.5 95.0v7M469.0 479.5h7M472.5 476.0v7M469.0 424.5h7M472.5 421.0v7M469.0 315.5h7M472.5 312.0v7M469.0 261.5h7M472.5 258.0v7M469.0 207.5h7M472.5 204.0v7M469.0 152.5h7M472.5 149.0v7M469.0 98.5h7M472.5 95.0v7" stroke="#b8b8b8" stroke-opacity=".9" stroke-width="1" fill="none" clip-path="url(#hc)"/><path d="M441.7 353.4 L248.3 208.2 L150.6 497.5 Z" fill="none" stroke="#2a2a2a" stroke-width="1.5" stroke-dasharray="2 2.1"/><path d="M458.5 359.4 L249.6 196.8 L145.5 497.8 Z" fill="none" stroke="#000" stroke-width="1.8" stroke-linejoin="miter"/><circle cx="263.0" cy="338.1" r="2" fill="#4a4a4a"/><circle cx="160.9" cy="530.8" r="3.8" fill="#3800cc" stroke="#ca8aea" stroke-width=".8"/><circle cx="131.8" cy="502.0" r="3.8" fill="#0008cc" stroke="#8a93ea" stroke-width=".8"/><circle cx="112.5" cy="461.2" r="3.8" fill="#0058cc" stroke="#8aeaea" stroke-width=".8"/><circle cx="85.3" cy="372.9" r="3.8" fill="#009cc6" stroke="#1bd4ea" stroke-width=".8"/><circle cx="63.3" cy="240.6" r="3.8" fill="#00c68d" stroke="#1beac3" stroke-width=".8"/><circle cx="66.7" cy="125.4" r="3.8" fill="#00db59" stroke="#1bea7b" stroke-width=".8"/><circle cx="101.6" cy="80.8" r="3.8" fill="#00e532" stroke="#1bea4f" stroke-width=".8"/><circle cx="149.9" cy="95.1" r="3.8" fill="#00e019" stroke="#1bea36" stroke-width=".8"/><circle cx="194.2" cy="123.1" r="3.8" fill="#17db00" stroke="#34ea1b" stroke-width=".8"/><circle cx="279.0" cy="193.7" r="3.8" fill="#6aa800" stroke="#afea1b" stroke-width=".8"/><circle cx="361.4" cy="268.7" r="3.8" fill="#af8600" stroke="#eacf1b" stroke-width=".8"/><circle cx="429.1" cy="330.8" r="3.8" fill="#bc3500" stroke="#ea5d1b" stroke-width=".8"/><circle cx="467.2" cy="365.7" r="3.8" fill="#cc0000" stroke="#ea8a8a" stroke-width=".8"/><circle cx="492.7" cy="389.1" r="3.8" fill="#d80000" stroke="#ea8a8a" stroke-width=".8"/><path d="M58.5 533v-5M58.5 75v5M117.5 533v-5M117.5 75v5M176.5 533v-5M176.5 75v5M235.5 533v-5M235.5 75v5M294.5 533v-5M294.5 75v5M354.5 533v-5M354.5 75v5M413.5 533v-5M413.5 75v5M472.5 533v-5M472.5 75v5M58 533.5h5M500 533.5h-5M58 479.5h5M500 479.5h-5M58 424.5h5M500 424.5h-5M58 370.5h5M500 370.5h-5M58 315.5h5M500 315.5h-5M58 261.5h5M500 261.5h-5M58 207.5h5M500 207.5h-5M58 152.5h5M500 152.5h-5M58 98.5h5M500 98.5h-5" stroke="#000" stroke-width="1" fill="none"/><rect x="58.5" y="75.5" width="441" height="458" fill="none" stroke="#000" stroke-width="1"/></svg><span class="tk" style="left:38.5px;top:537px;width:40px;text-align:center;transform:scaleX(.93)">0</span><span class="tk" style="left:97.6px;top:537px;width:40px;text-align:center;transform:scaleX(.93)">0.1</span><span class="tk" style="left:156.7px;top:537px;width:40px;text-align:center;transform:scaleX(.93)">0.2</span><span class="tk" style="left:215.8px;top:537px;width:40px;text-align:center;transform:scaleX(.93)">0.3</span><span class="tk" style="left:274.9px;top:537px;width:40px;text-align:center;transform:scaleX(.93)">0.4</span><span class="tk" style="left:334.0px;top:537px;width:40px;text-align:center;transform:scaleX(.93)">0.5</span><span class="tk" style="left:393.1px;top:537px;width:40px;text-align:center;transform:scaleX(.93)">0.6</span><span class="tk" style="left:452.2px;top:537px;width:40px;text-align:center;transform:scaleX(.93)">0.7</span><span class="tk" style="left:13.7px;top:526.2px;width:40px;text-align:right;transform:scaleX(.93);transform-origin:100% 50%">0</span><span class="tk" style="left:13.7px;top:472.2px;width:40px;text-align:right;transform:scaleX(.93);transform-origin:100% 50%">0.1</span><span class="tk" style="left:13.7px;top:417.2px;width:40px;text-align:right;transform:scaleX(.93);transform-origin:100% 50%">0.2</span><span class="tk" style="left:13.7px;top:363.2px;width:40px;text-align:right;transform:scaleX(.93);transform-origin:100% 50%">0.3</span><span class="tk" style="left:13.7px;top:308.2px;width:40px;text-align:right;transform:scaleX(.93);transform-origin:100% 50%">0.4</span><span class="tk" style="left:13.7px;top:254.2px;width:40px;text-align:right;transform:scaleX(.93);transform-origin:100% 50%">0.5</span><span class="tk" style="left:13.7px;top:200.2px;width:40px;text-align:right;transform:scaleX(.93);transform-origin:100% 50%">0.6</span><span class="tk" style="left:13.7px;top:145.2px;width:40px;text-align:right;transform:scaleX(.93);transform-origin:100% 50%">0.7</span><span class="tk" style="left:13.7px;top:91.2px;width:40px;text-align:right;transform:scaleX(.93);transform-origin:100% 50%">0.8</span><span style="left:273px;top:553px;font-size:12px;font-weight:bold;line-height:14px">x</span><span style="left:20.5px;top:298px;font-size:12px;font-weight:bold;line-height:14px;transform:rotate(-90deg)">y</span><span style="left:71px;top:53.7px;width:412px;text-align:center;font-size:13.2px;font-weight:bold;line-height:16px">CIE 1931 xy Chromaticity diagram</span><span class="inf" style="top:80.0px;font-size:10.8px">Input:  *sRGB</span><span class="inf" style="top:94.0px;font-size:11.1px">Output: AW2524H_standard.icm</span><span class="inf" style="top:108.0px;font-size:10.95px">White point:  x = 0.346  y = 0.359</span><span class="inf" style="top:122.0px;font-size:10.75px">20-Nov-2023 23:28:56</span><span class="wl" style="left:66.9px;top:76.3px;color:#d6d6d6">520</span><span class="wl" style="left:74.6px;top:119.3px;color:#0c6418">510</span><span class="wl" style="left:71.4px;top:234.3px;color:#0c8a52">500</span><span class="wl" style="left:93.4px;top:366.5px;color:#0e6e90">490</span><span class="wl" style="left:80.7px;top:454.6px;color:#d6d6d6">480</span><span class="wl" style="left:100.6px;top:495.7px;color:#d6d6d6">470</span><span class="wl" style="left:125.9px;top:520.3px;color:#d6d6d6">400</span><span class="wl" style="left:158.5px;top:89.5px;color:#d6d6d6">530</span><span class="wl" style="left:202.8px;top:117.5px;color:#d6d6d6">540</span><span class="wl" style="left:287.9px;top:188.2px;color:#d6d6d6">560</span><span class="wl" style="left:369.5px;top:262.2px;color:#d6d6d6">580</span><span class="wl" style="left:438.0px;top:323.9px;color:#d6d6d6">600</span><span class="wl" style="left:475.9px;top:359.2px;color:#d6d6d6">620</span><span class="wl" style="left:461.6px;top:381.1px;color:#8a1030">700</span><div style="left:552px;top:56px;width:234px;height:233px;background:linear-gradient(to bottom,rgba(134,134,134,0) 0%,rgba(134,134,134,.16) 25%,rgba(134,134,134,.42) 50%,rgba(134,134,134,.71) 75%,rgba(134,134,134,1) 100%),linear-gradient(to right,#ff0000 0%,#ff8000 9%,#ffff00 17%,#a0ff00 24%,#30f000 36.2%,#00ff60 43%,#00ffff 50.4%,#0090ff 56.5%,#0030ff 62%,#0020f0 71.4%,#8000ff 76.8%,#ff00ff 84.9%,#ff0080 93%,#ff0000 100%)"></div><div class="cb" style="left:553.4px;top:298.2px"></div><span class="t" style="left:571px;top:297.5px">Zoom</span><div style="left:616px;top:290.2px;width:175px;height:27.5px;background:#828282;border:1.5px solid #2a2a2a"></div><div class="btn" style="left:622px;top:295px;width:38.5px;height:19.5px;background:#f0f0f0"><span class="t" style="top:1.75px;color:#000;transform:scaleX(0.89);font-size:12px">Inp</span></div><div class="btn" style="left:665px;top:295px;width:38px;height:19.5px;background:#f0f0f0"><span class="t" style="top:1.75px;color:#000;transform:scaleX(0.89);font-size:12px">I&gt;M</span></div><div class="btn" style="left:707px;top:295px;width:38px;height:19.5px;background:#f0f0f0"><span class="t" style="top:1.75px;color:#000;transform:scaleX(0.89);font-size:12px">Outp</span></div><div class="btn" style="left:750px;top:295px;width:38.5px;height:19.5px;background:#ffffd0"><span class="tb" style="top:1.75px;color:#000;transform:scaleX(0.96);font-size:12px">O&gt;M</span></div><div class="btn" style="left:553px;top:315.8px;width:48px;height:20.2px;background:#f0f0f0"><span class="t" style="top:2.1px;color:#000;transform:scaleX(0.89);font-size:12px">Z-Out</span></div><span class="t" style="left:630.5px;top:323px">Black Pt. Comp.</span><div class="dd" style="left:709.5px;top:319.5px;width:79px;height:19px;background:#fff"><span class="t" style="left:1.8px;top:1.5px">Off</span><div class="ab"></div></div><div style="left:552.5px;top:341px;width:241px;height:27px;background:#808080;border:1.5px solid #2a2a2a"></div><div class="dd" style="left:556.5px;top:344.6px;width:232px;height:18.4px;background:#fff"><span class="tb" style="left:1.8px;top:1.2px;transform:scaleX(0.967)">xy Chromaticity (Saturation map)</span><div class="ab"></div></div><div class="fr" style="left:553px;top:368.6px;width:240px;height:129px"></div><div class="btn" style="left:558.5px;top:375.3px;width:79.3px;height:22.3px;background:#f0f0f0"><span class="t" style="top:3.15px;color:#9c9c9c;transform:scaleX(0.89);font-size:12px">Reset scale</span></div><div class="btn" style="left:642.5px;top:375.3px;width:76px;height:22.3px;background:#f0f0f0"><span class="t" style="top:3.15px;color:#9c9c9c;transform:scaleX(0.89);font-size:12px">Reset view</span></div><div class="btn" style="left:723.5px;top:375.3px;width:66px;height:22.3px;background:#f0f0f0"><span class="t" style="top:3.15px;color:#9c9c9c;transform:scaleX(0.89);font-size:12px">Top view</span></div><div class="cb" style="left:558.2px;top:403.7px"></div><svg style="position:absolute;left:560.2px;top:405.6px" width="9" height="9"><path d="M1 3.5L3.2 6L7.8 1.2" stroke="#000" stroke-width="1.7" fill="none"/></svg><span class="t" style="left:576px;top:403px;transform:scaleX(.93)">Wavelth</span><div class="dd" style="left:627px;top:401.5px;width:162px;height:19.5px;background:#fff"><span class="t" style="left:1.8px;top:1.75px">Normal/gamut boundaries</span><div class="ab"></div></div><div class="fr" style="left:553px;top:468px;width:87px;height:29.5px"></div><div class="btn" style="left:558px;top:473px;width:77.5px;height:21px;background:#f0f0f0"><span class="tb" style="top:1.5px;color:#000;transform:scaleX(1);font-size:12px">Print Test</span></div><div class="fr" style="left:553px;top:496.5px;width:240px;height:31px"></div><div style="left:558px;top:503px;width:230px;height:19px;border:1px solid;border-color:#7a7a7a #fff #fff #7a7a7a;box-shadow:inset 1px 1px 0 #9a9a9a"><span class="t" style="left:0;right:0;text-align:center;top:1.5px;transform-origin:50% 50%">not selected</span></div><div class="fr" style="left:559px;top:532px;width:143px;height:56px"></div><span class="tb" style="left:569.5px;top:537.5px">Display A</span><div class="btn" style="left:649.8px;top:537px;width:47px;height:22px;background:#f0f0f0"><span class="tb" style="top:3px;color:#000;transform:scaleX(1);font-size:12.5px">View</span></div><div class="dd" style="left:563.6px;top:562px;width:37.6px;height:18.8px;background:#fff"><span class="t" style="left:1.8px;top:1.4px">1</span><div class="ab"></div></div><span class="t" style="left:611px;top:564.5px;font-size:12.5px;transform:scaleX(.86)">IN  OUT</span><div class="dd" style="left:659.4px;top:562px;width:37.6px;height:18.8px;background:#fff"><span class="t" style="left:1.8px;top:1.4px">3</span><div class="ab"></div></div><div class="fr" style="left:559px;top:592px;width:143px;height:56px"></div><span class="tb" style="left:569.5px;top:597.5px">Display B</span><div class="btn" style="left:651px;top:597px;width:47px;height:22px;background:#f0f0f0"><span class="tb" style="top:3px;color:#000;transform:scaleX(1);font-size:12.5px">View</span></div><div class="dd" style="left:563.6px;top:622px;width:37.6px;height:18.8px;background:#fff"><span class="t" style="left:1.8px;top:1.4px">2</span><div class="ab"></div></div><span class="t" style="left:611px;top:624.5px;font-size:12.5px;transform:scaleX(.86)">IN  OUT</span><div class="dd" style="left:659.4px;top:622px;width:37.6px;height:18.8px;background:#fff"><span class="t" style="left:1.8px;top:1.4px">4</span><div class="ab"></div></div><div class="btn" style="left:720.5px;top:533px;width:69px;height:21.5px;background:#f0f0f0"><span class="t" style="top:1.45px;color:#000;transform:scaleX(0.89);font-size:12px">Help</span></div><div class="btn" style="left:720.5px;top:564.5px;width:69px;height:21.5px;background:#f0f0f0"><span class="t" style="top:2.75px;color:#000;transform:scaleX(0.89);font-size:12px">Exit</span></div><svg style="position:absolute;left:709px;top:596px" width="80" height="48" viewBox="0 0 80 48"><rect width="80" height="48" fill="#1010a8"/><path d="M2 0H80V11Z" fill="#0a7d0a"/><path d="M2 0L80 11V17.5Z" fill="#fff"/><path d="M2 0L80 17.5V23.5Z" fill="#d2420f"/><path d="M2 0L80 23.5V27Z" fill="#fff"/><path d="M2 0L80 27V29Z" fill="#8a2aa0"/><path d="M2 0L80 29V31Z" fill="#fff"/><path d="M7 7.2C12 7.5 24 16 31.5 20.7L9.8 28C5 24 1.5 11 7 7.2Z" fill="#ffffbe"/><text x="2.5" y="44.3" font-family="Liberation Serif" font-style="italic" font-size="17.4" fill="#fff" stroke="#fff" stroke-width=".35" textLength="76" lengthAdjust="spacingAndGlyphs">Gamutvision</text></svg><span style="left:8px;top:578px;font-weight:bold;font-size:13px;line-height:14px">1</span><span style="left:8px;top:629.5px;font-weight:bold;font-size:13px;line-height:14px">2</span><span style="left:535px;top:578px;font-weight:bold;font-size:13px;line-height:14px">3</span><span style="left:535px;top:629.5px;font-weight:bold;font-size:13px;line-height:14px">4</span><div class="dd" style="left:20px;top:575.2px;width:252px;height:19.3px;background:#ffffcc"><span class="t" style="left:1.8px;top:1.65px;transform:scaleX(0.875)">*sRGB   (IEC6 1996-2.1 sRGB)</span><div class="ab"></div></div><div class="dd" style="left:20px;top:627px;width:252px;height:19.3px;background:#e6ffe6"><span class="t" style="left:1.8px;top:1.65px;transform:scaleX(0.9)">AW2524H_standard.icm</span><div class="ab"></div></div><div class="dd" style="left:278.6px;top:575.2px;width:251px;height:19.3px;background:#f0f0f0"><span class="t" style="left:1.8px;top:1.65px">Browse...</span><div class="ab"></div></div><div class="dd" style="left:278.6px;top:627px;width:251px;height:19.3px;background:#f0f0f0"><span class="t" style="left:1.8px;top:1.65px">Browse...</span><div class="ab"></div></div><div style="left:20px;top:596px;width:223px;height:31px;background:#4f7fc4;border-left:1px solid #1c2c60;border-right:1px solid #1c2c60;border-top:1px solid #3a5a9c"></div><div class="btn" style="left:25px;top:601px;width:47.5px;height:23px;background:#ffffd0"><span class="tb" style="top:3.5px;color:#000;transform:scaleX(1);font-size:12.5px">View</span></div><div class="dd" style="left:95.5px;top:603px;width:139.5px;height:18px;background:#fff"><span class="t" style="left:1.8px;top:1px">None (or Print Test)</span><div class="ab"></div></div><span class="t" style="left:250px;top:604.5px">Rendering</span><div style="left:308px;top:596px;width:222.5px;height:31px;background:#808080;border-left:1px solid #3a3a3a;border-top:1px solid #4a4a4a"></div><div class="dd" style="left:312.5px;top:601.5px;width:142px;height:19.5px;background:#fff"><span class="t" style="left:1.8px;top:1.75px">Absolute</span><div class="ab"></div></div><div class="btn" style="left:479.5px;top:601.5px;width:48px;height:22.5px;background:#f0f0f0"><span class="tb" style="top:3.25px;color:#000;transform:scaleX(1);font-size:12.5px">View</span></div><svg style="position:absolute;left:5.8px;top:596px" width="12" height="30"><rect width="12" height="30" fill="#e2e2e2"/><path d="M4.5 1H7.8V20.5H10.6L6.1 28.5L1.6 20.5H4.5Z" fill="#555"/></svg><svg style="position:absolute;left:533.5px;top:596px" width="12" height="30"><rect width="12" height="30" fill="#e2e2e2"/><path d="M4.5 1H7.8V20.5H10.6L6.1 28.5L1.6 20.5H4.5Z" fill="#555"/></svg></body></html>
